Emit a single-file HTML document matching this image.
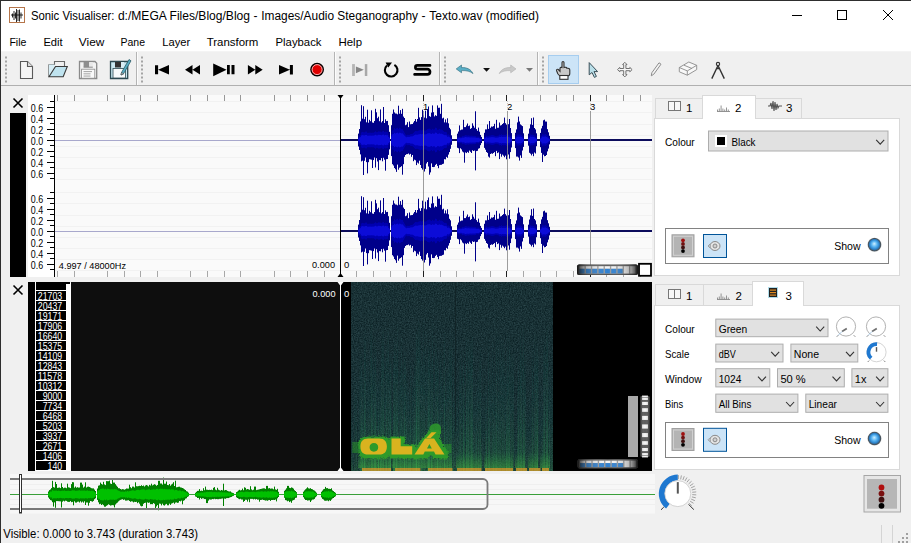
<!DOCTYPE html><html><head><meta charset="utf-8"><style>
html,body{margin:0;padding:0;background:#f0f0f0;}
body{width:911px;height:543px;overflow:hidden;position:relative;}
svg{position:absolute;left:0;top:0;font-family:"Liberation Sans",sans-serif;}
</style></head><body>
<svg width="911" height="543" viewBox="0 0 911 543">

<rect x="0" y="0" width="911" height="543" fill="#f0f0f0" />
<rect x="0" y="0" width="911" height="51" fill="#ffffff" />
<rect x="0" y="51" width="911" height="1" fill="#f4f4f4" />
<rect x="0" y="85" width="911" height="1" fill="#b0b0b0" />
<rect x="0" y="0" width="911" height="1" fill="#2e2e2e" />
<rect x="0" y="0" width="1" height="543" fill="#2e2e2e" />
<rect x="9.5" y="7.5" width="15" height="15" fill="#fff" stroke="#b5754a" stroke-width="1"/>
<path d="M11 15H23M12.5 13.5V17.5M14 11V20M15.5 12.5V18.5M16.5 9V22M18 10V21M19.5 9.5V21.5M21 12.5V18.5" fill="none" stroke="#111" stroke-width="0.9" />
<text x="30.9" y="20" font-size="12" fill="#000" textLength="83.6" lengthAdjust="spacingAndGlyphs" >Sonic Visualiser:</text>
<text x="117.9" y="20" font-size="12" fill="#000" textLength="132.1" lengthAdjust="spacingAndGlyphs" >d:/MEGA Files/Blog/Blog</text>
<text x="253.4" y="20" font-size="12" fill="#000" textLength="4" lengthAdjust="spacingAndGlyphs" >-</text>
<text x="261.3" y="20" font-size="12" fill="#000" textLength="156.7" lengthAdjust="spacingAndGlyphs" >Images/Audio Steganography</text>
<text x="421.4" y="20" font-size="12" fill="#000" textLength="4" lengthAdjust="spacingAndGlyphs" >-</text>
<text x="429.3" y="20" font-size="12" fill="#000" textLength="109.7" lengthAdjust="spacingAndGlyphs" >Texto.wav (modified)</text>
<path d="M792 15.5H802" fill="none" stroke="#000" stroke-width="1" />
<rect x="837.5" y="10.5" width="9" height="9" fill="none" stroke="#000" stroke-width="1"/>
<path d="M883 10L893 20M893 10L883 20" fill="none" stroke="#000" stroke-width="1" />
<text x="9.4" y="45.5" font-size="11.5" fill="#000" textLength="17" lengthAdjust="spacingAndGlyphs" >File</text>
<text x="43.4" y="45.5" font-size="11.5" fill="#000" textLength="19.2" lengthAdjust="spacingAndGlyphs" >Edit</text>
<text x="78.8" y="45.5" font-size="11.5" fill="#000" textLength="25.5" lengthAdjust="spacingAndGlyphs" >View</text>
<text x="120.5" y="45.5" font-size="11.5" fill="#000" textLength="24.5" lengthAdjust="spacingAndGlyphs" >Pane</text>
<text x="162.3" y="45.5" font-size="11.5" fill="#000" textLength="28" lengthAdjust="spacingAndGlyphs" >Layer</text>
<text x="206.7" y="45.5" font-size="11.5" fill="#000" textLength="51.7" lengthAdjust="spacingAndGlyphs" >Transform</text>
<text x="275.5" y="45.5" font-size="11.5" fill="#000" textLength="46" lengthAdjust="spacingAndGlyphs" >Playback</text>
<text x="338.5" y="45.5" font-size="11.5" fill="#000" textLength="23.5" lengthAdjust="spacingAndGlyphs" >Help</text>
<rect x="136" y="52" width="1" height="33" fill="#b4b4b4" />
<rect x="137" y="52" width="1" height="33" fill="#fcfcfc" />
<rect x="334" y="52" width="1" height="33" fill="#b4b4b4" />
<rect x="335" y="52" width="1" height="33" fill="#fcfcfc" />
<rect x="439" y="52" width="1" height="33" fill="#b4b4b4" />
<rect x="440" y="52" width="1" height="33" fill="#fcfcfc" />
<rect x="537" y="52" width="1" height="33" fill="#b4b4b4" />
<rect x="538" y="52" width="1" height="33" fill="#fcfcfc" />
<rect x="5" y="56.5" width="2" height="2" fill="#a4a4a4" />
<rect x="5" y="60.5" width="2" height="2" fill="#a4a4a4" />
<rect x="5" y="64.5" width="2" height="2" fill="#a4a4a4" />
<rect x="5" y="68.5" width="2" height="2" fill="#a4a4a4" />
<rect x="5" y="72.5" width="2" height="2" fill="#a4a4a4" />
<rect x="5" y="76.5" width="2" height="2" fill="#a4a4a4" />
<rect x="5" y="80.5" width="2" height="2" fill="#a4a4a4" />
<rect x="141" y="56.5" width="2" height="2" fill="#a4a4a4" />
<rect x="141" y="60.5" width="2" height="2" fill="#a4a4a4" />
<rect x="141" y="64.5" width="2" height="2" fill="#a4a4a4" />
<rect x="141" y="68.5" width="2" height="2" fill="#a4a4a4" />
<rect x="141" y="72.5" width="2" height="2" fill="#a4a4a4" />
<rect x="141" y="76.5" width="2" height="2" fill="#a4a4a4" />
<rect x="141" y="80.5" width="2" height="2" fill="#a4a4a4" />
<rect x="339" y="56.5" width="2" height="2" fill="#a4a4a4" />
<rect x="339" y="60.5" width="2" height="2" fill="#a4a4a4" />
<rect x="339" y="64.5" width="2" height="2" fill="#a4a4a4" />
<rect x="339" y="68.5" width="2" height="2" fill="#a4a4a4" />
<rect x="339" y="72.5" width="2" height="2" fill="#a4a4a4" />
<rect x="339" y="76.5" width="2" height="2" fill="#a4a4a4" />
<rect x="339" y="80.5" width="2" height="2" fill="#a4a4a4" />
<rect x="444" y="56.5" width="2" height="2" fill="#a4a4a4" />
<rect x="444" y="60.5" width="2" height="2" fill="#a4a4a4" />
<rect x="444" y="64.5" width="2" height="2" fill="#a4a4a4" />
<rect x="444" y="68.5" width="2" height="2" fill="#a4a4a4" />
<rect x="444" y="72.5" width="2" height="2" fill="#a4a4a4" />
<rect x="444" y="76.5" width="2" height="2" fill="#a4a4a4" />
<rect x="444" y="80.5" width="2" height="2" fill="#a4a4a4" />
<rect x="542" y="56.5" width="2" height="2" fill="#a4a4a4" />
<rect x="542" y="60.5" width="2" height="2" fill="#a4a4a4" />
<rect x="542" y="64.5" width="2" height="2" fill="#a4a4a4" />
<rect x="542" y="68.5" width="2" height="2" fill="#a4a4a4" />
<rect x="542" y="72.5" width="2" height="2" fill="#a4a4a4" />
<rect x="542" y="76.5" width="2" height="2" fill="#a4a4a4" />
<rect x="542" y="80.5" width="2" height="2" fill="#a4a4a4" />
<path d="M20.5 61.5H27.5L32.5 66.5V78.5H20.5Z" fill="#f6f6f6" stroke="#5a5a5a" stroke-width="1.1" />
<path d="M27.5 61.5V66.5H32.5" fill="#e0e0e0" stroke="#5a5a5a" stroke-width="1.1" />
<path d="M48.8 64.5H54.5V61.5H64.5V66.5" fill="#f0f0f0" stroke="#6a6a6a" stroke-width="1.1" />
<path d="M48.8 64.5V76.8" fill="none" stroke="#777" stroke-width="1.4" />
<path d="M48.8 64.5H54.5V76.5H48.8Z" fill="#d8eef6" stroke="none" stroke-width="1" />
<path d="M55.5 66.5H67.3L63.2 76.8H49Z" fill="#bfe3ef" stroke="#3a3a3a" stroke-width="1.1" />
<path d="M79.5 61.5H95L96.7 63.2V78.5H79.5Z" fill="#f2f2f2" stroke="#8a8a8a" stroke-width="1.3" />
<rect x="83.6" y="62" width="5.6" height="5.2" fill="#8e8e8e" />
<rect x="89.2" y="62" width="3.6" height="5.2" fill="#e8e8e8" />
<path d="M83.6 67.2H92.8" fill="none" stroke="#8a8a8a" stroke-width="1" />
<rect x="81.6" y="69.2" width="13.2" height="9" fill="#fafafa" stroke="#8a8a8a" stroke-width="0.8"/>
<rect x="83.5" y="71.2" width="8.5" height="0.9" fill="#9a9a9a" />
<rect x="83.5" y="73.4" width="7" height="0.9" fill="#9a9a9a" />
<rect x="83.5" y="75.6" width="7" height="0.9" fill="#9a9a9a" />
<path d="M110.5 61.5H127.7V78.5H110.5Z" fill="#c9e8f1" stroke="#2d4a52" stroke-width="1.3" />
<rect x="115" y="62" width="6" height="5.5" fill="#333" />
<rect x="121" y="62" width="3" height="5.5" fill="#d9eef5" />
<rect x="113" y="68.5" width="12.5" height="9.5" fill="#f8fbfc" stroke="#2d4a52" stroke-width="0.8"/>
<path d="M121.5 72.5L129 59.5L131 60.8L123.5 73.8L121 75Z" fill="#58aec4" stroke="#2d5a66" stroke-width="0.8" />
<path d="M121.5 72.5L123.5 73.8L121 75Z" fill="#fff" stroke="#333" stroke-width="0.6" />
<path d="M155 65.2H158.1V74.3H155Z M158.1 69.7L169 65V74.5Z" fill="#000" stroke="none" stroke-width="1" />
<path d="M185 69.7L192.5 65V74.5Z M192.5 69.7L200 65V74.5Z" fill="#000" stroke="none" stroke-width="1" />
<path d="M213.2 63.4L226.6 69.8L213.2 76.3Z M227 65.1H229.8V74.3H227Z M231.5 65.1H234.5V74.3H231.5Z" fill="#000" stroke="none" stroke-width="1" />
<path d="M247.9 65V74.5L255.3 69.7Z M255.3 65V74.5L262.7 69.7Z" fill="#000" stroke="none" stroke-width="1" />
<path d="M279 65V74.5L289.9 69.7Z M289.9 65H292.9V74.5H289.9Z" fill="#000" stroke="none" stroke-width="1" />
<circle cx="317.1" cy="69.6" r="6.2" fill="#e00000" stroke="#000" stroke-width="1.4"/>
<circle cx="317.1" cy="69.6" r="5" fill="none" stroke="#fff" stroke-width="0.7"/>
<rect x="352.1" y="64.1" width="2.8" height="11.9" fill="#b4b4b4" />
<path d="M355.9 66.4L363.8 69.8L355.9 73.3Z" fill="#858585" stroke="none" stroke-width="1" />
<rect x="364.8" y="64.1" width="2.5" height="11.9" fill="#a8a8a8" />
<path d="M387 65.5A6.3 6.3 0 1 0 394.4 64.8" fill="none" stroke="#000" stroke-width="2.1" />
<path d="M385.6 62.6H392L388.3 67.6Z" fill="#000" stroke="none" stroke-width="1" />
<path d="M430 65.4H417.3A1.8 1.8 0 0 0 417.3 69.2H427.4A2 2 0 0 1 427.4 74.4H414.6" fill="none" stroke="#000" stroke-width="2.7" stroke-linecap="round" stroke-linejoin="round"/>
<path d="M456.2 68.9L461.5 65V67.6C466.5 67.2 471 69.2 473 73.6C470.3 71.3 466.5 70.4 461.5 70.6V72.8Z" fill="#5aaec6" stroke="#2f6a7a" stroke-width="0.6" />
<path d="M483.1 67.9H490L486.55 71.8Z" fill="#111" stroke="none" stroke-width="1" />
<path d="M516 68.9L510.7 65V67.6C505.7 67.2 501.2 69.2 499.2 73.6C501.9 71.3 505.7 70.4 510.7 70.6V72.8Z" fill="#c8c8c8" stroke="#b0b0b0" stroke-width="0.6" />
<path d="M526 67.9H533L529.5 71.8Z" fill="#777" stroke="none" stroke-width="1" />
<rect x="548.5" y="55.5" width="30" height="28" fill="#cce4f7" stroke="#a6cdef" stroke-width="1"/>
<path d="M562 62.5C562 61.2 564 61.2 564 62.5V67.5C565.5 67 566.8 67.4 567 68.3C568.5 68 569.8 68.8 569.8 70V73.5C569.8 75 568.5 76 567.5 76H560.5C559.5 76 558.6 75 557.8 73.8L556.5 70.5C556.2 69.5 557.5 68.8 558.3 69.5L560 71.3V68C560.5 67.2 561.5 67.3 562 67.5Z" fill="#c9c9c9" stroke="#303030" stroke-width="1.1" />
<rect x="559.8" y="75.5" width="8.2" height="3.8" fill="#fff" stroke="#303030" stroke-width="1.1"/>
<path d="M589.2 62.6V74.8L592 72.5L594.4 77.4L596.4 76.4L594 71.6H597.6Z" fill="#b9dfe9" stroke="#3b4f58" stroke-width="1" />
<path d="M624.8 62.3L627 64.6H625.9V68.5H629.8V67.4L632.1 69.6L629.8 71.8V70.7H625.9V74.6H627L624.8 76.9L622.6 74.6H623.7V70.7H619.8V71.8L617.5 69.6L619.8 67.4V68.5H623.7V64.6H622.6Z" fill="#f6f6f6" stroke="#707070" stroke-width="1" />
<path d="M651.3 75.8L651.8 72.8L659 62.8L661 64.2L653.8 74.2Z" fill="#f4f4f4" stroke="#8c8c8c" stroke-width="1" />
<path d="M679.3 67.5L688.8 62L696.7 65.3V69.6L687.3 75.2L679.3 71.8Z" fill="#f8f8f8" stroke="#8a8a8a" stroke-width="0.9" />
<path d="M679.3 67.5L687.3 70.9L696.7 65.3M687.3 70.9V75.2M684 65.2L692 68.5" fill="none" stroke="#8a8a8a" stroke-width="0.9" />
<circle cx="718" cy="63.9" r="1.6" fill="#fff" stroke="#333" stroke-width="1.2"/>
<path d="M718 65.5L711.8 78.6M718 65.5L724.3 78.6M716.3 68.5H719.7" fill="none" stroke="#333" stroke-width="1.4" />
<rect x="10" y="113" width="16" height="164" fill="#000" />
<path d="M13.5 98.5L22.5 107.5M22.5 98.5L13.5 107.5" fill="none" stroke="#000" stroke-width="1.6" />
<rect x="28" y="95" width="27" height="182" fill="#ffffff" />
<rect x="55" y="95" width="597" height="182" fill="#fafafa" />
<rect x="55" y="135" width="597" height="1" fill="#f2f2f2" />
<rect x="55" y="146" width="597" height="1" fill="#f2f2f2" />
<rect x="55" y="124" width="597" height="1" fill="#f2f2f2" />
<rect x="55" y="157" width="597" height="1" fill="#f2f2f2" />
<rect x="55" y="112" width="597" height="1" fill="#f2f2f2" />
<rect x="55" y="168" width="597" height="1" fill="#f2f2f2" />
<rect x="55" y="101" width="597" height="1" fill="#f2f2f2" />
<rect x="55" y="179" width="597" height="1" fill="#f2f2f2" />
<rect x="55" y="226" width="597" height="1" fill="#f2f2f2" />
<rect x="55" y="237" width="597" height="1" fill="#f2f2f2" />
<rect x="55" y="215" width="597" height="1" fill="#f2f2f2" />
<rect x="55" y="248" width="597" height="1" fill="#f2f2f2" />
<rect x="55" y="203" width="597" height="1" fill="#f2f2f2" />
<rect x="55" y="259" width="597" height="1" fill="#f2f2f2" />
<rect x="55" y="192" width="597" height="1" fill="#f2f2f2" />
<rect x="55" y="270" width="597" height="1" fill="#f2f2f2" />
<rect x="54" y="95" width="1" height="182" fill="#000" />
<rect x="47" y="107" width="7" height="1" fill="#000" />
<rect x="47" y="118" width="7" height="1" fill="#000" />
<rect x="47" y="129" width="7" height="1" fill="#000" />
<rect x="47" y="140" width="7" height="1" fill="#000" />
<rect x="47" y="151" width="7" height="1" fill="#000" />
<rect x="47" y="162" width="7" height="1" fill="#000" />
<rect x="47" y="173" width="7" height="1" fill="#000" />
<rect x="50" y="101" width="4" height="1" fill="#000" />
<rect x="50" y="112" width="4" height="1" fill="#000" />
<rect x="50" y="123" width="4" height="1" fill="#000" />
<rect x="50" y="134" width="4" height="1" fill="#000" />
<rect x="50" y="145" width="4" height="1" fill="#000" />
<rect x="50" y="156" width="4" height="1" fill="#000" />
<rect x="50" y="167" width="4" height="1" fill="#000" />
<rect x="50" y="178" width="4" height="1" fill="#000" />
<text x="30.8" y="111.6" font-size="10.5" fill="#000" textLength="12.4" lengthAdjust="spacingAndGlyphs" >0.6</text>
<text x="30.8" y="122.6" font-size="10.5" fill="#000" textLength="12.4" lengthAdjust="spacingAndGlyphs" >0.4</text>
<text x="30.8" y="133.6" font-size="10.5" fill="#000" textLength="12.4" lengthAdjust="spacingAndGlyphs" >0.2</text>
<text x="30.8" y="144.6" font-size="10.5" fill="#000" textLength="12.4" lengthAdjust="spacingAndGlyphs" >0.0</text>
<text x="30.8" y="155.6" font-size="10.5" fill="#000" textLength="12.4" lengthAdjust="spacingAndGlyphs" >0.2</text>
<text x="30.8" y="166.6" font-size="10.5" fill="#000" textLength="12.4" lengthAdjust="spacingAndGlyphs" >0.4</text>
<text x="30.8" y="177.6" font-size="10.5" fill="#000" textLength="12.4" lengthAdjust="spacingAndGlyphs" >0.6</text>
<rect x="47" y="198" width="7" height="1" fill="#000" />
<rect x="47" y="209" width="7" height="1" fill="#000" />
<rect x="47" y="220" width="7" height="1" fill="#000" />
<rect x="47" y="231" width="7" height="1" fill="#000" />
<rect x="47" y="242" width="7" height="1" fill="#000" />
<rect x="47" y="253" width="7" height="1" fill="#000" />
<rect x="47" y="264" width="7" height="1" fill="#000" />
<rect x="50" y="192" width="4" height="1" fill="#000" />
<rect x="50" y="203" width="4" height="1" fill="#000" />
<rect x="50" y="214" width="4" height="1" fill="#000" />
<rect x="50" y="225" width="4" height="1" fill="#000" />
<rect x="50" y="236" width="4" height="1" fill="#000" />
<rect x="50" y="247" width="4" height="1" fill="#000" />
<rect x="50" y="258" width="4" height="1" fill="#000" />
<rect x="50" y="269" width="4" height="1" fill="#000" />
<text x="30.8" y="202.6" font-size="10.5" fill="#000" textLength="12.4" lengthAdjust="spacingAndGlyphs" >0.6</text>
<text x="30.8" y="213.6" font-size="10.5" fill="#000" textLength="12.4" lengthAdjust="spacingAndGlyphs" >0.4</text>
<text x="30.8" y="224.6" font-size="10.5" fill="#000" textLength="12.4" lengthAdjust="spacingAndGlyphs" >0.2</text>
<text x="30.8" y="235.6" font-size="10.5" fill="#000" textLength="12.4" lengthAdjust="spacingAndGlyphs" >0.0</text>
<text x="30.8" y="246.6" font-size="10.5" fill="#000" textLength="12.4" lengthAdjust="spacingAndGlyphs" >0.2</text>
<text x="30.8" y="257.6" font-size="10.5" fill="#000" textLength="12.4" lengthAdjust="spacingAndGlyphs" >0.4</text>
<text x="30.8" y="268.6" font-size="10.5" fill="#000" textLength="12.4" lengthAdjust="spacingAndGlyphs" >0.6</text>
<rect x="57" y="95" width="1" height="6" fill="#989898" />
<rect x="57" y="271" width="1" height="6" fill="#a8a8a8" />
<rect x="74" y="95" width="1" height="6" fill="#989898" />
<rect x="74" y="271" width="1" height="6" fill="#a8a8a8" />
<rect x="107" y="95" width="1" height="6" fill="#989898" />
<rect x="107" y="271" width="1" height="6" fill="#a8a8a8" />
<rect x="124" y="95" width="1" height="6" fill="#989898" />
<rect x="124" y="271" width="1" height="6" fill="#a8a8a8" />
<rect x="140" y="95" width="1" height="6" fill="#989898" />
<rect x="140" y="271" width="1" height="6" fill="#a8a8a8" />
<rect x="157" y="95" width="1" height="6" fill="#989898" />
<rect x="157" y="271" width="1" height="6" fill="#a8a8a8" />
<rect x="190" y="95" width="1" height="6" fill="#989898" />
<rect x="190" y="271" width="1" height="6" fill="#a8a8a8" />
<rect x="207" y="95" width="1" height="6" fill="#989898" />
<rect x="207" y="271" width="1" height="6" fill="#a8a8a8" />
<rect x="224" y="95" width="1" height="6" fill="#989898" />
<rect x="224" y="271" width="1" height="6" fill="#a8a8a8" />
<rect x="240" y="95" width="1" height="6" fill="#989898" />
<rect x="240" y="271" width="1" height="6" fill="#a8a8a8" />
<rect x="274" y="95" width="1" height="6" fill="#989898" />
<rect x="274" y="271" width="1" height="6" fill="#a8a8a8" />
<rect x="290" y="95" width="1" height="6" fill="#989898" />
<rect x="290" y="271" width="1" height="6" fill="#a8a8a8" />
<rect x="307" y="95" width="1" height="6" fill="#989898" />
<rect x="307" y="271" width="1" height="6" fill="#a8a8a8" />
<rect x="324" y="95" width="1" height="6" fill="#989898" />
<rect x="324" y="271" width="1" height="6" fill="#a8a8a8" />
<rect x="356" y="95" width="1" height="6" fill="#989898" />
<rect x="356" y="271" width="1" height="6" fill="#a8a8a8" />
<rect x="373" y="95" width="1" height="6" fill="#989898" />
<rect x="373" y="271" width="1" height="6" fill="#a8a8a8" />
<rect x="390" y="95" width="1" height="6" fill="#989898" />
<rect x="390" y="271" width="1" height="6" fill="#a8a8a8" />
<rect x="406" y="95" width="1" height="6" fill="#989898" />
<rect x="406" y="271" width="1" height="6" fill="#a8a8a8" />
<rect x="423" y="95" width="1" height="6" fill="#202020" />
<rect x="423" y="271" width="1" height="6" fill="#202020" />
<rect x="440" y="95" width="1" height="6" fill="#989898" />
<rect x="440" y="271" width="1" height="6" fill="#a8a8a8" />
<rect x="456" y="95" width="1" height="6" fill="#989898" />
<rect x="456" y="271" width="1" height="6" fill="#a8a8a8" />
<rect x="473" y="95" width="1" height="6" fill="#989898" />
<rect x="473" y="271" width="1" height="6" fill="#a8a8a8" />
<rect x="490" y="95" width="1" height="6" fill="#989898" />
<rect x="490" y="271" width="1" height="6" fill="#a8a8a8" />
<rect x="506" y="95" width="1" height="6" fill="#202020" />
<rect x="506" y="271" width="1" height="6" fill="#202020" />
<rect x="523" y="95" width="1" height="6" fill="#989898" />
<rect x="523" y="271" width="1" height="6" fill="#a8a8a8" />
<rect x="540" y="95" width="1" height="6" fill="#989898" />
<rect x="540" y="271" width="1" height="6" fill="#a8a8a8" />
<rect x="556" y="95" width="1" height="6" fill="#989898" />
<rect x="556" y="271" width="1" height="6" fill="#a8a8a8" />
<rect x="573" y="95" width="1" height="6" fill="#989898" />
<rect x="573" y="271" width="1" height="6" fill="#a8a8a8" />
<rect x="590" y="95" width="1" height="6" fill="#202020" />
<rect x="590" y="271" width="1" height="6" fill="#202020" />
<rect x="606" y="95" width="1" height="6" fill="#989898" />
<rect x="606" y="271" width="1" height="6" fill="#a8a8a8" />
<rect x="623" y="95" width="1" height="6" fill="#989898" />
<rect x="623" y="271" width="1" height="6" fill="#a8a8a8" />
<rect x="640" y="95" width="1" height="6" fill="#989898" />
<rect x="640" y="271" width="1" height="6" fill="#a8a8a8" />
<text x="423" y="110" font-size="9.5" fill="#000" >1</text>
<text x="507" y="110" font-size="9.5" fill="#000" >2</text>
<text x="590" y="110" font-size="9.5" fill="#000" >3</text>
<rect x="55" y="140" width="285" height="1" fill="#a8a8cc" />
<rect x="340" y="139" width="312" height="2" fill="#0c0c5c" />
<rect x="55" y="231" width="285" height="1" fill="#a8a8cc" />
<rect x="340" y="230" width="312" height="2" fill="#0c0c5c" />
<text x="58.8" y="269" font-size="9.5" fill="#000" textLength="67.2" lengthAdjust="spacingAndGlyphs" >4.997 / 48000Hz</text>
<text x="312" y="268" font-size="9.5" fill="#000" textLength="23" lengthAdjust="spacingAndGlyphs" >0.000</text>
<text x="344" y="268" font-size="9.5" fill="#000" >0</text>
<path d="M358.50 133.6V146.5M359.50 129.0V150.0M360.50 121.4V154.4M361.50 105.2V161.4M362.50 118.7V160.7M363.50 106.2V175.0M364.50 119.2V160.8M365.50 116.8V157.5M366.50 122.3V162.1M367.50 109.7V173.4M368.50 122.7V162.2M369.50 119.8V159.2M370.50 121.2V159.4M371.50 110.3V159.7M372.50 122.5V168.0M373.50 122.8V160.1M374.50 121.0V157.5M375.50 108.8V167.5M376.50 112.3V158.2M377.50 118.2V161.5M378.50 116.7V170.1M379.50 121.2V160.1M380.50 109.4V160.3M381.50 122.4V158.1M382.50 121.1V161.3M383.50 107.0V157.8M384.50 123.0V159.7M385.50 119.3V170.7M386.50 121.1V159.2M387.50 120.9V159.0M388.50 125.2V154.9M389.50 131.8V149.4M391.50 125.2V156.1M392.50 113.8V164.2M393.50 109.5V165.5M394.50 112.4V168.0M395.50 113.5V169.3M396.50 113.6V171.9M397.50 114.3V164.6M398.50 105.7V169.7M399.50 113.7V167.7M400.50 110.1V167.1M401.50 113.8V166.2M402.50 108.8V174.7M403.50 116.6V164.2M404.50 118.0V156.9M405.50 125.2V155.0M406.50 124.6V154.2M407.50 122.2V154.1M408.50 127.1V153.5M409.50 121.5V154.6M410.50 124.3V153.9M411.50 124.1V156.8M412.50 124.0V155.0M413.50 122.5V161.2M414.50 121.0V159.7M415.50 119.0V160.3M416.50 121.7V165.1M417.50 119.0V162.6M418.50 107.8V163.6M419.50 117.4V160.7M420.50 119.9V165.0M421.50 117.1V168.0M422.50 109.7V169.6M423.50 115.3V168.7M424.50 117.6V171.5M425.50 110.7V168.9M426.50 118.3V163.5M427.50 109.1V162.0M428.50 106.5V166.5M429.50 116.1V174.7M430.50 116.8V172.4M431.50 112.6V163.4M432.50 105.4V167.0M433.50 112.2V167.1M434.50 116.4V166.8M435.50 115.2V164.9M436.50 115.9V163.9M437.50 105.4V165.9M438.50 107.8V168.2M439.50 107.7V165.1M440.50 113.8V164.9M441.50 103.8V164.8M442.50 118.4V164.1M443.50 117.7V163.7M444.50 122.4V159.2M445.50 119.4V159.4M446.50 122.5V156.9M447.50 118.3V157.8M448.50 123.3V154.6M449.50 127.8V152.1M450.50 129.3V148.8M451.50 135.3V144.8M457.50 133.7V147.8M458.50 131.5V148.3M459.50 125.4V153.1M460.50 130.2V148.3M461.50 129.6V149.4M462.50 129.5V151.5M463.50 119.8V152.4M464.50 127.1V162.7M465.50 127.1V152.4M466.50 125.5V153.1M467.50 123.5V151.9M468.50 126.1V152.8M469.50 125.5V150.6M470.50 128.9V151.8M471.50 128.1V153.0M472.50 123.3V150.3M473.50 125.7V151.0M474.50 127.7V150.6M475.50 111.3V170.4M476.50 129.1V151.1M477.50 130.8V150.8M478.50 127.6V148.7M479.50 131.7V148.2M480.50 134.9V145.2M481.50 136.9V143.1M484.50 132.8V147.9M485.50 129.4V149.7M486.50 129.4V152.0M487.50 124.4V152.9M488.50 128.9V156.6M489.50 121.0V157.6M490.50 127.8V154.0M491.50 126.5V153.4M492.50 126.7V153.8M493.50 126.1V153.0M494.50 123.8V152.1M495.50 128.8V156.2M496.50 119.8V150.9M497.50 127.8V153.1M498.50 127.7V152.4M499.50 122.5V159.1M500.50 125.5V153.8M501.50 125.1V156.7M502.50 124.0V154.6M503.50 123.1V155.7M504.50 117.6V157.2M505.50 123.2V155.6M506.50 124.6V159.3M507.50 119.0V156.2M508.50 124.2V154.5M509.50 119.0V158.7M510.50 128.0V152.1M511.50 133.1V147.5M515.50 132.8V148.1M516.50 129.4V156.6M517.50 122.4V156.6M518.50 116.6V157.5M519.50 121.5V160.6M520.50 124.4V155.4M521.50 125.3V157.9M522.50 126.1V150.5M523.50 133.3V146.9M528.50 133.7V145.7M529.50 128.5V152.8M530.50 124.4V153.7M531.50 118.2V155.4M532.50 124.9V153.8M533.50 117.5V156.2M534.50 128.0V152.5M535.50 129.4V153.5M536.50 133.3V146.2M540.50 132.9V147.2M541.50 128.4V152.9M542.50 125.8V162.0M543.50 120.3V154.7M544.50 119.7V156.3M545.50 121.5V156.0M546.50 121.6V155.0M547.50 129.2V151.4M548.50 132.3V148.6M549.50 135.8V144.4" stroke="#00008a" stroke-width="1" fill="none"/>
<path d="M358.50 137.7V142.3M359.50 136.0V144.0M360.50 135.2V144.8M361.50 132.4V147.6M362.50 131.9V148.1M363.50 132.2V147.8M364.50 132.3V147.7M365.50 131.7V148.3M366.50 131.6V148.4M367.50 132.8V147.2M368.50 132.8V147.2M369.50 132.7V147.3M370.50 132.7V147.3M371.50 132.8V147.2M372.50 132.7V147.3M373.50 132.7V147.3M374.50 132.1V147.9M375.50 131.3V148.7M376.50 132.2V147.8M377.50 132.1V147.9M378.50 131.4V148.6M379.50 131.5V148.5M380.50 131.7V148.3M381.50 132.2V147.8M382.50 131.4V148.6M383.50 131.0V149.0M384.50 132.1V147.9M385.50 131.7V148.3M386.50 132.0V148.0M387.50 132.1V147.9M388.50 134.8V145.2M389.50 136.6V143.4M391.50 134.2V145.8M392.50 130.7V149.3M393.50 130.0V150.0M394.50 128.2V151.8M395.50 129.1V150.9M396.50 128.3V151.7M397.50 127.8V152.2M398.50 129.1V150.9M399.50 127.8V152.2M400.50 128.2V151.8M401.50 129.0V151.0M402.50 129.0V151.0M403.50 130.8V149.2M404.50 132.6V147.4M405.50 134.4V145.6M406.50 135.3V144.7M407.50 134.8V145.2M408.50 134.9V145.1M409.50 134.9V145.1M410.50 134.2V145.8M411.50 134.0V146.0M412.50 133.8V146.2M413.50 132.9V147.1M414.50 131.8V148.2M415.50 131.0V149.0M416.50 131.1V148.9M417.50 131.2V148.8M418.50 130.7V149.3M419.50 130.3V149.7M420.50 129.8V150.2M421.50 130.5V149.5M422.50 129.8V150.2M423.50 129.6V150.4M424.50 130.6V149.4M425.50 130.6V149.4M426.50 130.1V149.9M427.50 129.1V150.9M428.50 128.8V151.2M429.50 128.6V151.4M430.50 129.3V150.7M431.50 129.9V150.1M432.50 128.9V151.1M433.50 129.6V150.4M434.50 129.4V150.6M435.50 127.7V152.3M436.50 128.1V151.9M437.50 129.8V150.2M438.50 129.7V150.3M439.50 128.9V151.1M440.50 129.6V150.4M441.50 129.6V150.4M442.50 130.1V149.9M443.50 131.1V148.9M444.50 131.9V148.1M445.50 131.9V148.1M446.50 132.3V147.7M447.50 134.6V145.4M448.50 134.4V145.6M449.50 135.3V144.7M450.50 137.4V142.6M451.50 138.4V141.6M457.50 137.5V142.5M458.50 137.1V142.9M459.50 136.6V143.4M460.50 137.0V143.0M461.50 136.8V143.2M462.50 135.9V144.1M463.50 136.1V143.9M464.50 135.7V144.3M465.50 135.1V144.9M466.50 135.3V144.7M467.50 135.6V144.4M468.50 135.4V144.6M469.50 135.7V144.3M470.50 135.8V144.2M471.50 135.7V144.3M472.50 135.8V144.2M473.50 135.9V144.1M474.50 135.8V144.2M475.50 136.0V144.0M476.50 136.7V143.3M477.50 136.7V143.3M478.50 136.6V143.4M479.50 137.4V142.6M480.50 138.2V141.8M481.50 138.9V141.1M484.50 137.0V143.0M485.50 136.5V143.5M486.50 135.4V144.6M487.50 136.1V143.9M488.50 136.0V144.0M489.50 135.7V144.3M490.50 135.5V144.5M491.50 135.2V144.8M492.50 135.1V144.9M493.50 135.3V144.7M494.50 135.7V144.3M495.50 136.1V143.9M496.50 136.2V143.8M497.50 135.9V144.1M498.50 135.6V144.4M499.50 134.7V145.3M500.50 135.0V145.0M501.50 134.3V145.7M502.50 135.0V145.0M503.50 134.8V145.2M504.50 134.9V145.1M505.50 134.8V145.2M506.50 134.2V145.8M507.50 134.8V145.2M508.50 134.7V145.3M509.50 135.5V144.5M510.50 136.1V143.9M511.50 137.7V142.3M515.50 137.6V142.4M516.50 135.8V144.2M517.50 134.5V145.5M518.50 134.4V145.6M519.50 134.6V145.4M520.50 134.4V145.6M521.50 135.1V144.9M522.50 136.2V143.8M523.50 137.8V142.2M528.50 137.5V142.5M529.50 136.3V143.7M530.50 134.4V145.6M531.50 134.8V145.2M532.50 134.7V145.3M533.50 135.0V145.0M534.50 135.5V144.5M535.50 136.8V143.2M536.50 138.0V142.0M540.50 137.9V142.1M541.50 135.9V144.1M542.50 134.2V145.8M543.50 134.5V145.5M544.50 134.4V145.6M545.50 134.2V145.8M546.50 134.9V145.1M547.50 135.9V144.1M548.50 137.3V142.7M549.50 138.5V141.5" stroke="#0000b0" stroke-width="1" fill="none"/>
<path d="M358.50 138.6V141.4M359.50 137.6V142.4M360.50 137.1V142.9M361.50 135.5V144.5M362.50 135.1V144.9M363.50 135.3V144.7M364.50 135.4V144.6M365.50 135.0V145.0M366.50 135.0V145.0M367.50 135.7V144.3M368.50 135.7V144.3M369.50 135.6V144.4M370.50 135.6V144.4M371.50 135.7V144.3M372.50 135.6V144.4M373.50 135.6V144.4M374.50 135.3V144.7M375.50 134.8V145.2M376.50 135.3V144.7M377.50 135.3V144.7M378.50 134.8V145.2M379.50 134.9V145.1M380.50 135.0V145.0M381.50 135.3V144.7M382.50 134.8V145.2M383.50 134.6V145.4M384.50 135.3V144.7M385.50 135.0V145.0M386.50 135.2V144.8M387.50 135.2V144.8M388.50 136.9V143.1M389.50 138.0V142.0M391.50 136.5V143.5M392.50 134.4V145.6M393.50 134.0V146.0M394.50 132.9V147.1M395.50 133.5V146.5M396.50 133.0V147.0M397.50 132.7V147.3M398.50 133.4V146.6M399.50 132.7V147.3M400.50 132.9V147.1M401.50 133.4V146.6M402.50 133.4V146.6M403.50 134.5V145.5M404.50 135.6V144.4M405.50 136.6V143.4M406.50 137.2V142.8M407.50 136.9V143.1M408.50 136.9V143.1M409.50 136.9V143.1M410.50 136.5V143.5M411.50 136.4V143.6M412.50 136.3V143.7M413.50 135.8V144.2M414.50 135.1V144.9M415.50 134.6V145.4M416.50 134.7V145.3M417.50 134.7V145.3M418.50 134.4V145.6M419.50 134.2V145.8M420.50 133.9V146.1M421.50 134.3V145.7M422.50 133.9V146.1M423.50 133.8V146.2M424.50 134.4V145.6M425.50 134.4V145.6M426.50 134.1V145.9M427.50 133.5V146.5M428.50 133.3V146.7M429.50 133.2V146.8M430.50 133.6V146.4M431.50 134.0V146.0M432.50 133.3V146.7M433.50 133.7V146.3M434.50 133.6V146.4M435.50 132.6V147.4M436.50 132.9V147.1M437.50 133.9V146.1M438.50 133.8V146.2M439.50 133.4V146.6M440.50 133.8V146.2M441.50 133.7V146.3M442.50 134.1V145.9M443.50 134.6V145.4M444.50 135.1V144.9M445.50 135.1V144.9M446.50 135.4V144.6M447.50 136.8V143.2M448.50 136.6V143.4M449.50 137.2V142.8M450.50 138.4V141.6M451.50 139.1V140.9M457.50 138.5V141.5M458.50 138.2V141.8M459.50 137.9V142.1M460.50 138.2V141.8M461.50 138.1V141.9M462.50 137.6V142.4M463.50 137.7V142.3M464.50 137.4V142.6M465.50 137.0V143.0M466.50 137.2V142.8M467.50 137.3V142.7M468.50 137.2V142.8M469.50 137.4V142.6M470.50 137.5V142.5M471.50 137.4V142.6M472.50 137.5V142.5M473.50 137.5V142.5M474.50 137.5V142.5M475.50 137.6V142.4M476.50 138.0V142.0M477.50 138.0V142.0M478.50 137.9V142.1M479.50 138.5V141.5M480.50 138.9V141.1M481.50 139.3V140.7M484.50 138.2V141.8M485.50 137.9V142.1M486.50 137.2V142.8M487.50 137.7V142.3M488.50 137.6V142.4M489.50 137.4V142.6M490.50 137.3V142.7M491.50 137.1V142.9M492.50 137.1V142.9M493.50 137.2V142.8M494.50 137.4V142.6M495.50 137.7V142.3M496.50 137.7V142.3M497.50 137.6V142.4M498.50 137.4V142.6M499.50 136.8V143.2M500.50 137.0V143.0M501.50 136.6V143.4M502.50 137.0V143.0M503.50 136.9V143.1M504.50 136.9V143.1M505.50 136.9V143.1M506.50 136.5V143.5M507.50 136.9V143.1M508.50 136.8V143.2M509.50 137.3V142.7M510.50 137.7V142.3M511.50 138.6V141.4M515.50 138.6V141.4M516.50 137.5V142.5M517.50 136.7V143.3M518.50 136.6V143.4M519.50 136.8V143.2M520.50 136.6V143.4M521.50 137.0V143.0M522.50 137.7V142.3M523.50 138.7V141.3M528.50 138.5V141.5M529.50 137.8V142.2M530.50 136.6V143.4M531.50 136.9V143.1M532.50 136.8V143.2M533.50 137.0V143.0M534.50 137.3V142.7M535.50 138.1V141.9M536.50 138.8V141.2M540.50 138.7V141.3M541.50 137.6V142.4M542.50 136.5V143.5M543.50 136.7V143.3M544.50 136.6V143.4M545.50 136.5V143.5M546.50 137.0V143.0M547.50 137.5V142.5M548.50 138.4V141.6M549.50 139.1V140.9" stroke="#0c0cd8" stroke-width="1" fill="none"/>
<path d="M358.50 224.6V237.5M359.50 220.0V241.0M360.50 212.4V245.4M361.50 196.2V252.4M362.50 209.7V251.7M363.50 197.2V266.0M364.50 210.2V251.8M365.50 207.8V248.5M366.50 213.3V253.1M367.50 200.7V264.4M368.50 213.7V253.2M369.50 210.8V250.2M370.50 212.2V250.4M371.50 201.3V250.7M372.50 213.5V259.0M373.50 213.8V251.1M374.50 212.0V248.5M375.50 199.8V258.5M376.50 203.3V249.2M377.50 209.2V252.5M378.50 207.7V261.1M379.50 212.2V251.1M380.50 200.4V251.3M381.50 213.4V249.1M382.50 212.1V252.3M383.50 198.0V248.8M384.50 214.0V250.7M385.50 210.3V261.7M386.50 212.1V250.2M387.50 211.9V250.0M388.50 216.2V245.9M389.50 222.8V240.4M391.50 216.2V247.1M392.50 204.8V255.2M393.50 200.5V256.5M394.50 203.4V259.0M395.50 204.5V260.3M396.50 204.6V262.9M397.50 205.3V255.6M398.50 196.7V260.7M399.50 204.7V258.7M400.50 201.1V258.1M401.50 204.8V257.2M402.50 199.8V265.7M403.50 207.6V255.2M404.50 209.0V247.9M405.50 216.2V246.0M406.50 215.6V245.2M407.50 213.2V245.1M408.50 218.1V244.5M409.50 212.5V245.6M410.50 215.3V244.9M411.50 215.1V247.8M412.50 215.0V246.0M413.50 213.5V252.2M414.50 212.0V250.7M415.50 210.0V251.3M416.50 212.7V256.1M417.50 210.0V253.6M418.50 198.8V254.6M419.50 208.4V251.7M420.50 210.9V256.0M421.50 208.1V259.0M422.50 200.7V260.6M423.50 206.3V259.7M424.50 208.6V262.5M425.50 201.7V259.9M426.50 209.3V254.5M427.50 200.1V253.0M428.50 197.5V257.5M429.50 207.1V265.7M430.50 207.8V263.4M431.50 203.6V254.4M432.50 196.4V258.0M433.50 203.2V258.1M434.50 207.4V257.8M435.50 206.2V255.9M436.50 206.9V254.9M437.50 196.4V256.9M438.50 198.8V259.2M439.50 198.7V256.1M440.50 204.8V255.9M441.50 194.8V255.8M442.50 209.4V255.1M443.50 208.7V254.7M444.50 213.4V250.2M445.50 210.4V250.4M446.50 213.5V247.9M447.50 209.3V248.8M448.50 214.3V245.6M449.50 218.8V243.1M450.50 220.3V239.8M451.50 226.3V235.8M457.50 224.7V238.8M458.50 222.5V239.3M459.50 216.4V244.1M460.50 221.2V239.3M461.50 220.6V240.4M462.50 220.5V242.5M463.50 210.8V243.4M464.50 218.1V253.7M465.50 218.1V243.4M466.50 216.5V244.1M467.50 214.5V242.9M468.50 217.1V243.8M469.50 216.5V241.6M470.50 219.9V242.8M471.50 219.1V244.0M472.50 214.3V241.3M473.50 216.7V242.0M474.50 218.7V241.6M475.50 202.3V261.4M476.50 220.1V242.1M477.50 221.8V241.8M478.50 218.6V239.7M479.50 222.7V239.2M480.50 225.9V236.2M481.50 227.9V234.1M484.50 223.8V238.9M485.50 220.4V240.7M486.50 220.4V243.0M487.50 215.4V243.9M488.50 219.9V247.6M489.50 212.0V248.6M490.50 218.8V245.0M491.50 217.5V244.4M492.50 217.7V244.8M493.50 217.1V244.0M494.50 214.8V243.1M495.50 219.8V247.2M496.50 210.8V241.9M497.50 218.8V244.1M498.50 218.7V243.4M499.50 213.5V250.1M500.50 216.5V244.8M501.50 216.1V247.7M502.50 215.0V245.6M503.50 214.1V246.7M504.50 208.6V248.2M505.50 214.2V246.6M506.50 215.6V250.3M507.50 210.0V247.2M508.50 215.2V245.5M509.50 210.0V249.7M510.50 219.0V243.1M511.50 224.1V238.5M515.50 223.8V239.1M516.50 220.4V247.6M517.50 213.4V247.6M518.50 207.6V248.5M519.50 212.5V251.6M520.50 215.4V246.4M521.50 216.3V248.9M522.50 217.1V241.5M523.50 224.3V237.9M528.50 224.7V236.7M529.50 219.5V243.8M530.50 215.4V244.7M531.50 209.2V246.4M532.50 215.9V244.8M533.50 208.5V247.2M534.50 219.0V243.5M535.50 220.4V244.5M536.50 224.3V237.2M540.50 223.9V238.2M541.50 219.4V243.9M542.50 216.8V253.0M543.50 211.3V245.7M544.50 210.7V247.3M545.50 212.5V247.0M546.50 212.6V246.0M547.50 220.2V242.4M548.50 223.3V239.6M549.50 226.8V235.4" stroke="#00008a" stroke-width="1" fill="none"/>
<path d="M358.50 228.7V233.3M359.50 227.0V235.0M360.50 226.2V235.8M361.50 223.4V238.6M362.50 222.9V239.1M363.50 223.2V238.8M364.50 223.3V238.7M365.50 222.7V239.3M366.50 222.6V239.4M367.50 223.8V238.2M368.50 223.8V238.2M369.50 223.7V238.3M370.50 223.7V238.3M371.50 223.8V238.2M372.50 223.7V238.3M373.50 223.7V238.3M374.50 223.1V238.9M375.50 222.3V239.7M376.50 223.2V238.8M377.50 223.1V238.9M378.50 222.4V239.6M379.50 222.5V239.5M380.50 222.7V239.3M381.50 223.2V238.8M382.50 222.4V239.6M383.50 222.0V240.0M384.50 223.1V238.9M385.50 222.7V239.3M386.50 223.0V239.0M387.50 223.1V238.9M388.50 225.8V236.2M389.50 227.6V234.4M391.50 225.2V236.8M392.50 221.7V240.3M393.50 221.0V241.0M394.50 219.2V242.8M395.50 220.1V241.9M396.50 219.3V242.7M397.50 218.8V243.2M398.50 220.1V241.9M399.50 218.8V243.2M400.50 219.2V242.8M401.50 220.0V242.0M402.50 220.0V242.0M403.50 221.8V240.2M404.50 223.6V238.4M405.50 225.4V236.6M406.50 226.3V235.7M407.50 225.8V236.2M408.50 225.9V236.1M409.50 225.9V236.1M410.50 225.2V236.8M411.50 225.0V237.0M412.50 224.8V237.2M413.50 223.9V238.1M414.50 222.8V239.2M415.50 222.0V240.0M416.50 222.1V239.9M417.50 222.2V239.8M418.50 221.7V240.3M419.50 221.3V240.7M420.50 220.8V241.2M421.50 221.5V240.5M422.50 220.8V241.2M423.50 220.6V241.4M424.50 221.6V240.4M425.50 221.6V240.4M426.50 221.1V240.9M427.50 220.1V241.9M428.50 219.8V242.2M429.50 219.6V242.4M430.50 220.3V241.7M431.50 220.9V241.1M432.50 219.9V242.1M433.50 220.6V241.4M434.50 220.4V241.6M435.50 218.7V243.3M436.50 219.1V242.9M437.50 220.8V241.2M438.50 220.7V241.3M439.50 219.9V242.1M440.50 220.6V241.4M441.50 220.6V241.4M442.50 221.1V240.9M443.50 222.1V239.9M444.50 222.9V239.1M445.50 222.9V239.1M446.50 223.3V238.7M447.50 225.6V236.4M448.50 225.4V236.6M449.50 226.3V235.7M450.50 228.4V233.6M451.50 229.4V232.6M457.50 228.5V233.5M458.50 228.1V233.9M459.50 227.6V234.4M460.50 228.0V234.0M461.50 227.8V234.2M462.50 226.9V235.1M463.50 227.1V234.9M464.50 226.7V235.3M465.50 226.1V235.9M466.50 226.3V235.7M467.50 226.6V235.4M468.50 226.4V235.6M469.50 226.7V235.3M470.50 226.8V235.2M471.50 226.7V235.3M472.50 226.8V235.2M473.50 226.9V235.1M474.50 226.8V235.2M475.50 227.0V235.0M476.50 227.7V234.3M477.50 227.7V234.3M478.50 227.6V234.4M479.50 228.4V233.6M480.50 229.2V232.8M481.50 229.9V232.1M484.50 228.0V234.0M485.50 227.5V234.5M486.50 226.4V235.6M487.50 227.1V234.9M488.50 227.0V235.0M489.50 226.7V235.3M490.50 226.5V235.5M491.50 226.2V235.8M492.50 226.1V235.9M493.50 226.3V235.7M494.50 226.7V235.3M495.50 227.1V234.9M496.50 227.2V234.8M497.50 226.9V235.1M498.50 226.6V235.4M499.50 225.7V236.3M500.50 226.0V236.0M501.50 225.3V236.7M502.50 226.0V236.0M503.50 225.8V236.2M504.50 225.9V236.1M505.50 225.8V236.2M506.50 225.2V236.8M507.50 225.8V236.2M508.50 225.7V236.3M509.50 226.5V235.5M510.50 227.1V234.9M511.50 228.7V233.3M515.50 228.6V233.4M516.50 226.8V235.2M517.50 225.5V236.5M518.50 225.4V236.6M519.50 225.6V236.4M520.50 225.4V236.6M521.50 226.1V235.9M522.50 227.2V234.8M523.50 228.8V233.2M528.50 228.5V233.5M529.50 227.3V234.7M530.50 225.4V236.6M531.50 225.8V236.2M532.50 225.7V236.3M533.50 226.0V236.0M534.50 226.5V235.5M535.50 227.8V234.2M536.50 229.0V233.0M540.50 228.9V233.1M541.50 226.9V235.1M542.50 225.2V236.8M543.50 225.5V236.5M544.50 225.4V236.6M545.50 225.2V236.8M546.50 225.9V236.1M547.50 226.9V235.1M548.50 228.3V233.7M549.50 229.5V232.5" stroke="#0000b0" stroke-width="1" fill="none"/>
<path d="M358.50 229.6V232.4M359.50 228.6V233.4M360.50 228.1V233.9M361.50 226.5V235.5M362.50 226.1V235.9M363.50 226.3V235.7M364.50 226.4V235.6M365.50 226.0V236.0M366.50 226.0V236.0M367.50 226.7V235.3M368.50 226.7V235.3M369.50 226.6V235.4M370.50 226.6V235.4M371.50 226.7V235.3M372.50 226.6V235.4M373.50 226.6V235.4M374.50 226.3V235.7M375.50 225.8V236.2M376.50 226.3V235.7M377.50 226.3V235.7M378.50 225.8V236.2M379.50 225.9V236.1M380.50 226.0V236.0M381.50 226.3V235.7M382.50 225.8V236.2M383.50 225.6V236.4M384.50 226.3V235.7M385.50 226.0V236.0M386.50 226.2V235.8M387.50 226.2V235.8M388.50 227.9V234.1M389.50 229.0V233.0M391.50 227.5V234.5M392.50 225.4V236.6M393.50 225.0V237.0M394.50 223.9V238.1M395.50 224.5V237.5M396.50 224.0V238.0M397.50 223.7V238.3M398.50 224.4V237.6M399.50 223.7V238.3M400.50 223.9V238.1M401.50 224.4V237.6M402.50 224.4V237.6M403.50 225.5V236.5M404.50 226.6V235.4M405.50 227.6V234.4M406.50 228.2V233.8M407.50 227.9V234.1M408.50 227.9V234.1M409.50 227.9V234.1M410.50 227.5V234.5M411.50 227.4V234.6M412.50 227.3V234.7M413.50 226.8V235.2M414.50 226.1V235.9M415.50 225.6V236.4M416.50 225.7V236.3M417.50 225.7V236.3M418.50 225.4V236.6M419.50 225.2V236.8M420.50 224.9V237.1M421.50 225.3V236.7M422.50 224.9V237.1M423.50 224.8V237.2M424.50 225.4V236.6M425.50 225.4V236.6M426.50 225.1V236.9M427.50 224.5V237.5M428.50 224.3V237.7M429.50 224.2V237.8M430.50 224.6V237.4M431.50 225.0V237.0M432.50 224.3V237.7M433.50 224.7V237.3M434.50 224.6V237.4M435.50 223.6V238.4M436.50 223.9V238.1M437.50 224.9V237.1M438.50 224.8V237.2M439.50 224.4V237.6M440.50 224.8V237.2M441.50 224.7V237.3M442.50 225.1V236.9M443.50 225.6V236.4M444.50 226.1V235.9M445.50 226.1V235.9M446.50 226.4V235.6M447.50 227.8V234.2M448.50 227.6V234.4M449.50 228.2V233.8M450.50 229.4V232.6M451.50 230.1V231.9M457.50 229.5V232.5M458.50 229.2V232.8M459.50 228.9V233.1M460.50 229.2V232.8M461.50 229.1V232.9M462.50 228.6V233.4M463.50 228.7V233.3M464.50 228.4V233.6M465.50 228.0V234.0M466.50 228.2V233.8M467.50 228.3V233.7M468.50 228.2V233.8M469.50 228.4V233.6M470.50 228.5V233.5M471.50 228.4V233.6M472.50 228.5V233.5M473.50 228.5V233.5M474.50 228.5V233.5M475.50 228.6V233.4M476.50 229.0V233.0M477.50 229.0V233.0M478.50 228.9V233.1M479.50 229.5V232.5M480.50 229.9V232.1M481.50 230.3V231.7M484.50 229.2V232.8M485.50 228.9V233.1M486.50 228.2V233.8M487.50 228.7V233.3M488.50 228.6V233.4M489.50 228.4V233.6M490.50 228.3V233.7M491.50 228.1V233.9M492.50 228.1V233.9M493.50 228.2V233.8M494.50 228.4V233.6M495.50 228.7V233.3M496.50 228.7V233.3M497.50 228.6V233.4M498.50 228.4V233.6M499.50 227.8V234.2M500.50 228.0V234.0M501.50 227.6V234.4M502.50 228.0V234.0M503.50 227.9V234.1M504.50 227.9V234.1M505.50 227.9V234.1M506.50 227.5V234.5M507.50 227.9V234.1M508.50 227.8V234.2M509.50 228.3V233.7M510.50 228.7V233.3M511.50 229.6V232.4M515.50 229.6V232.4M516.50 228.5V233.5M517.50 227.7V234.3M518.50 227.6V234.4M519.50 227.8V234.2M520.50 227.6V234.4M521.50 228.0V234.0M522.50 228.7V233.3M523.50 229.7V232.3M528.50 229.5V232.5M529.50 228.8V233.2M530.50 227.6V234.4M531.50 227.9V234.1M532.50 227.8V234.2M533.50 228.0V234.0M534.50 228.3V233.7M535.50 229.1V232.9M536.50 229.8V232.2M540.50 229.7V232.3M541.50 228.6V233.4M542.50 227.5V234.5M543.50 227.7V234.3M544.50 227.6V234.4M545.50 227.5V234.5M546.50 228.0V234.0M547.50 228.5V233.5M548.50 229.4V232.6M549.50 230.1V231.9" stroke="#0c0cd8" stroke-width="1" fill="none"/>
<rect x="423" y="111" width="1" height="160" fill="#8c8c8c" opacity="0.85"/>
<rect x="423" y="101" width="1" height="1" fill="#c8c8c8" />
<rect x="423" y="103" width="1" height="1" fill="#c8c8c8" />
<rect x="423" y="105" width="1" height="1" fill="#c8c8c8" />
<rect x="423" y="107" width="1" height="1" fill="#c8c8c8" />
<rect x="423" y="109" width="1" height="1" fill="#c8c8c8" />
<rect x="507" y="111" width="1" height="160" fill="#8c8c8c" opacity="0.85"/>
<rect x="507" y="101" width="1" height="1" fill="#c8c8c8" />
<rect x="507" y="103" width="1" height="1" fill="#c8c8c8" />
<rect x="507" y="105" width="1" height="1" fill="#c8c8c8" />
<rect x="507" y="107" width="1" height="1" fill="#c8c8c8" />
<rect x="507" y="109" width="1" height="1" fill="#c8c8c8" />
<rect x="590" y="111" width="1" height="160" fill="#8c8c8c" opacity="0.85"/>
<rect x="590" y="101" width="1" height="1" fill="#c8c8c8" />
<rect x="590" y="103" width="1" height="1" fill="#c8c8c8" />
<rect x="590" y="105" width="1" height="1" fill="#c8c8c8" />
<rect x="590" y="107" width="1" height="1" fill="#c8c8c8" />
<rect x="590" y="109" width="1" height="1" fill="#c8c8c8" />
<rect x="340" y="96" width="1" height="181" fill="#000" />
<path d="M337.5 95H343.5L340.5 99Z" fill="#000" stroke="none" stroke-width="1" />
<path d="M337.5 277H343.5L340.5 273Z" fill="#000" stroke="none" stroke-width="1" />
<rect x="577" y="264.5" width="61" height="10.5" rx="2" fill="url(#twh)"/>
<rect x="577" y="264.5" width="61" height="10.5" rx="2.5" fill="#505050"/>
<rect x="578.5" y="265.8" width="58" height="8" fill="#9a9a9a" />
<rect x="579.5" y="266.3" width="5" height="2.5" fill="#f4f4f4" />
<rect x="579.5" y="268.8" width="5" height="4.6" fill="#2f80d0" />
<rect x="585.85" y="266.3" width="5" height="2.5" fill="#f4f4f4" />
<rect x="585.85" y="268.8" width="5" height="4.6" fill="#2f80d0" />
<rect x="592.2" y="266.3" width="5" height="2.5" fill="#f4f4f4" />
<rect x="592.2" y="268.8" width="5" height="4.6" fill="#2f80d0" />
<rect x="598.55" y="266.3" width="5" height="2.5" fill="#f4f4f4" />
<rect x="598.55" y="268.8" width="5" height="4.6" fill="#2f80d0" />
<rect x="604.9" y="266.3" width="5" height="2.5" fill="#f4f4f4" />
<rect x="604.9" y="268.8" width="5" height="4.6" fill="#2f80d0" />
<rect x="611.25" y="266.3" width="5" height="2.5" fill="#f4f4f4" />
<rect x="611.25" y="268.8" width="5" height="4.6" fill="#2f80d0" />
<rect x="617.6" y="266.3" width="5" height="2.5" fill="#f4f4f4" />
<rect x="617.6" y="268.8" width="5" height="4.6" fill="#2f80d0" />
<rect x="623.95" y="266.3" width="5" height="7.1" fill="#f4f4f4" />
<rect x="630.3" y="266.3" width="5" height="7.1" fill="#f4f4f4" />
<rect x="577" y="264.5" width="61" height="10.5" rx="2.5" fill="url(#twh)"/>
<rect x="639" y="263.8" width="12" height="12" fill="#fff" stroke="#000" stroke-width="1.8"/>
<path d="M13.5 285.5L22.5 294.5M22.5 285.5L13.5 294.5" fill="none" stroke="#000" stroke-width="1.6" />
<rect x="28" y="282" width="7" height="189" fill="#000" />
<rect x="35" y="282" width="1" height="189" fill="#ffffff" />
<rect x="36" y="282" width="30" height="189" fill="#000" />
<rect x="66" y="283" width="5" height="188" fill="#ffffff" />
<rect x="36" y="282" width="34" height="2" fill="#000" />
<rect x="71" y="282" width="270" height="189" fill="#0e0e0e" />
<rect x="341" y="282" width="311" height="189" fill="#000" />
<rect x="36" y="290" width="30" height="1" fill="#ffffff" />
<rect x="36" y="300" width="30" height="1" fill="#ffffff" />
<rect x="36" y="310" width="30" height="1" fill="#ffffff" />
<rect x="36" y="320" width="30" height="1" fill="#ffffff" />
<rect x="36" y="330" width="30" height="1" fill="#ffffff" />
<rect x="36" y="340" width="30" height="1" fill="#ffffff" />
<rect x="36" y="350" width="30" height="1" fill="#ffffff" />
<rect x="36" y="360" width="30" height="1" fill="#ffffff" />
<rect x="36" y="370" width="30" height="1" fill="#ffffff" />
<rect x="36" y="380" width="30" height="1" fill="#ffffff" />
<rect x="36" y="390" width="30" height="1" fill="#ffffff" />
<rect x="36" y="400" width="30" height="1" fill="#ffffff" />
<rect x="36" y="410" width="30" height="1" fill="#ffffff" />
<rect x="36" y="420" width="30" height="1" fill="#ffffff" />
<rect x="36" y="430" width="30" height="1" fill="#ffffff" />
<rect x="36" y="440" width="30" height="1" fill="#ffffff" />
<rect x="36" y="450" width="30" height="1" fill="#ffffff" />
<rect x="36" y="460" width="30" height="1" fill="#ffffff" />
<rect x="36" y="470" width="30" height="1" fill="#ffffff" />
<text x="62.2" y="300.3" font-size="10.3" fill="#ffffff" textLength="24.4" lengthAdjust="spacingAndGlyphs" text-anchor="end" >21703</text>
<text x="62.2" y="310.3" font-size="10.3" fill="#ffffff" textLength="24.4" lengthAdjust="spacingAndGlyphs" text-anchor="end" >20437</text>
<text x="62.2" y="320.3" font-size="10.3" fill="#ffffff" textLength="24.4" lengthAdjust="spacingAndGlyphs" text-anchor="end" >19171</text>
<text x="62.2" y="330.3" font-size="10.3" fill="#ffffff" textLength="24.4" lengthAdjust="spacingAndGlyphs" text-anchor="end" >17906</text>
<text x="62.2" y="340.3" font-size="10.3" fill="#ffffff" textLength="24.4" lengthAdjust="spacingAndGlyphs" text-anchor="end" >16640</text>
<text x="62.2" y="350.3" font-size="10.3" fill="#ffffff" textLength="24.4" lengthAdjust="spacingAndGlyphs" text-anchor="end" >15375</text>
<text x="62.2" y="360.3" font-size="10.3" fill="#ffffff" textLength="24.4" lengthAdjust="spacingAndGlyphs" text-anchor="end" >14109</text>
<text x="62.2" y="370.3" font-size="10.3" fill="#ffffff" textLength="24.4" lengthAdjust="spacingAndGlyphs" text-anchor="end" >12843</text>
<text x="62.2" y="380.3" font-size="10.3" fill="#ffffff" textLength="24.4" lengthAdjust="spacingAndGlyphs" text-anchor="end" >11578</text>
<text x="62.2" y="390.3" font-size="10.3" fill="#ffffff" textLength="24.4" lengthAdjust="spacingAndGlyphs" text-anchor="end" >10312</text>
<text x="62.2" y="400.3" font-size="10.3" fill="#ffffff" textLength="19.52" lengthAdjust="spacingAndGlyphs" text-anchor="end" >9000</text>
<text x="62.2" y="410.3" font-size="10.3" fill="#ffffff" textLength="19.52" lengthAdjust="spacingAndGlyphs" text-anchor="end" >7734</text>
<text x="62.2" y="420.3" font-size="10.3" fill="#ffffff" textLength="19.52" lengthAdjust="spacingAndGlyphs" text-anchor="end" >6468</text>
<text x="62.2" y="430.3" font-size="10.3" fill="#ffffff" textLength="19.52" lengthAdjust="spacingAndGlyphs" text-anchor="end" >5203</text>
<text x="62.2" y="440.3" font-size="10.3" fill="#ffffff" textLength="19.52" lengthAdjust="spacingAndGlyphs" text-anchor="end" >3937</text>
<text x="62.2" y="450.3" font-size="10.3" fill="#ffffff" textLength="19.52" lengthAdjust="spacingAndGlyphs" text-anchor="end" >2671</text>
<text x="62.2" y="460.3" font-size="10.3" fill="#ffffff" textLength="19.52" lengthAdjust="spacingAndGlyphs" text-anchor="end" >1406</text>
<text x="62.2" y="470.3" font-size="10.3" fill="#ffffff" textLength="14.64" lengthAdjust="spacingAndGlyphs" text-anchor="end" >140</text>
<text x="335.5" y="297" font-size="9.5" fill="#ffffff" textLength="23" lengthAdjust="spacingAndGlyphs" text-anchor="end" >0.000</text>
<text x="344" y="297" font-size="9.5" fill="#ffffff" >0</text>
<defs>
<filter id="nz" x="0" y="0" width="1" height="1" filterUnits="objectBoundingBox">
<feTurbulence type="fractalNoise" baseFrequency="0.75" numOctaves="2" seed="4" result="t"/>
<feColorMatrix in="t" type="matrix" values="0 0 0 0 0.12  0 0 0 0 0.25  0 0 0 0 0.27  0.6 0 0 0 -0.15" result="c"/>
<feComposite in="c" in2="SourceGraphic" operator="in"/>
</filter>
<linearGradient id="sg" x1="0" y1="0" x2="0" y2="1">
<stop offset="0" stop-color="#1f6a58" stop-opacity="0"/>
<stop offset="0.5" stop-color="#22785a" stop-opacity="0.3"/>
<stop offset="0.85" stop-color="#2a8c50" stop-opacity="0.65"/>
<stop offset="1" stop-color="#3aa048" stop-opacity="0.9"/>
</linearGradient>
</defs>
<rect x="351" y="282" width="202" height="189" fill="#0c2125" />
<rect x="351" y="282" width="202" height="189" fill="#fff" filter="url(#nz)"/>
<filter id="sb" x="-0.01" y="0" width="1.02" height="1"><feGaussianBlur stdDeviation="0.7 0"/></filter><g filter="url(#sb)">
<rect x="351" y="400.7" width="1" height="70.3" fill="url(#sg)" opacity="0.22"/>
<rect x="352" y="409.6" width="1" height="61.4" fill="url(#sg)" opacity="0.29"/>
<rect x="353" y="411.0" width="1" height="60.0" fill="url(#sg)" opacity="0.09"/>
<rect x="354" y="352.9" width="1" height="118.1" fill="url(#sg)" opacity="0.22"/>
<rect x="355" y="383.1" width="1" height="87.9" fill="url(#sg)" opacity="0.19"/>
<rect x="356" y="360.2" width="1" height="110.8" fill="url(#sg)" opacity="0.31"/>
<rect x="357" y="398.6" width="1" height="72.4" fill="url(#sg)" opacity="0.15"/>
<rect x="358" y="354.7" width="1" height="116.3" fill="url(#sg)" opacity="0.12"/>
<rect x="359" y="345.1" width="1" height="125.9" fill="url(#sg)" opacity="0.22"/>
<rect x="360" y="348.4" width="1" height="122.6" fill="url(#sg)" opacity="0.44"/>
<rect x="361" y="345.8" width="1" height="125.2" fill="url(#sg)" opacity="0.60"/>
<rect x="362" y="365.2" width="1" height="105.8" fill="url(#sg)" opacity="0.71"/>
<rect x="363" y="358.3" width="1" height="112.7" fill="url(#sg)" opacity="0.37"/>
<rect x="364" y="331.3" width="1" height="139.7" fill="url(#sg)" opacity="0.82"/>
<rect x="365" y="321.1" width="1" height="149.9" fill="url(#sg)" opacity="0.46"/>
<rect x="366" y="353.5" width="1" height="117.5" fill="url(#sg)" opacity="0.28"/>
<rect x="367" y="335.4" width="1" height="135.6" fill="url(#sg)" opacity="0.24"/>
<rect x="368" y="345.7" width="1" height="125.3" fill="url(#sg)" opacity="0.42"/>
<rect x="369" y="361.5" width="1" height="109.5" fill="url(#sg)" opacity="0.42"/>
<rect x="370" y="314.0" width="1" height="157.0" fill="url(#sg)" opacity="0.27"/>
<rect x="371" y="313.8" width="1" height="157.2" fill="url(#sg)" opacity="0.67"/>
<rect x="372" y="353.2" width="1" height="117.8" fill="url(#sg)" opacity="0.69"/>
<rect x="373" y="325.5" width="1" height="145.5" fill="url(#sg)" opacity="0.36"/>
<rect x="374" y="365.5" width="1" height="105.5" fill="url(#sg)" opacity="0.78"/>
<rect x="375" y="336.1" width="1" height="134.9" fill="url(#sg)" opacity="0.78"/>
<rect x="376" y="365.6" width="1" height="105.4" fill="url(#sg)" opacity="0.45"/>
<rect x="377" y="366.5" width="1" height="104.5" fill="url(#sg)" opacity="0.31"/>
<rect x="378" y="376.2" width="1" height="94.8" fill="url(#sg)" opacity="1.00"/>
<rect x="379" y="352.8" width="1" height="118.2" fill="url(#sg)" opacity="0.30"/>
<rect x="380" y="374.7" width="1" height="96.3" fill="url(#sg)" opacity="0.80"/>
<rect x="381" y="332.2" width="1" height="138.8" fill="url(#sg)" opacity="0.58"/>
<rect x="382" y="320.4" width="1" height="150.6" fill="url(#sg)" opacity="0.53"/>
<rect x="383" y="321.3" width="1" height="149.7" fill="url(#sg)" opacity="0.66"/>
<rect x="384" y="347.3" width="1" height="123.7" fill="url(#sg)" opacity="0.28"/>
<rect x="385" y="351.6" width="1" height="119.4" fill="url(#sg)" opacity="0.49"/>
<rect x="386" y="340.0" width="1" height="131.0" fill="url(#sg)" opacity="0.74"/>
<rect x="387" y="313.7" width="1" height="157.3" fill="url(#sg)" opacity="0.28"/>
<rect x="388" y="321.6" width="1" height="149.4" fill="url(#sg)" opacity="0.52"/>
<rect x="389" y="357.5" width="1" height="113.5" fill="url(#sg)" opacity="0.65"/>
<rect x="390" y="349.2" width="1" height="121.8" fill="url(#sg)" opacity="0.91"/>
<rect x="391" y="349.1" width="1" height="121.9" fill="url(#sg)" opacity="0.22"/>
<rect x="392" y="404.7" width="1" height="66.3" fill="url(#sg)" opacity="0.18"/>
<rect x="393" y="351.6" width="1" height="119.4" fill="url(#sg)" opacity="0.72"/>
<rect x="394" y="330.4" width="1" height="140.6" fill="url(#sg)" opacity="0.69"/>
<rect x="395" y="336.4" width="1" height="134.6" fill="url(#sg)" opacity="0.49"/>
<rect x="396" y="353.9" width="1" height="117.1" fill="url(#sg)" opacity="0.84"/>
<rect x="397" y="316.2" width="1" height="154.8" fill="url(#sg)" opacity="0.55"/>
<rect x="398" y="370.7" width="1" height="100.3" fill="url(#sg)" opacity="0.41"/>
<rect x="399" y="364.2" width="1" height="106.8" fill="url(#sg)" opacity="0.47"/>
<rect x="400" y="363.2" width="1" height="107.8" fill="url(#sg)" opacity="0.67"/>
<rect x="401" y="329.7" width="1" height="141.3" fill="url(#sg)" opacity="0.47"/>
<rect x="402" y="358.4" width="1" height="112.6" fill="url(#sg)" opacity="0.54"/>
<rect x="403" y="355.5" width="1" height="115.5" fill="url(#sg)" opacity="0.43"/>
<rect x="404" y="348.3" width="1" height="122.7" fill="url(#sg)" opacity="0.90"/>
<rect x="405" y="342.4" width="1" height="128.6" fill="url(#sg)" opacity="0.40"/>
<rect x="406" y="367.8" width="1" height="103.2" fill="url(#sg)" opacity="0.71"/>
<rect x="407" y="368.5" width="1" height="102.5" fill="url(#sg)" opacity="0.40"/>
<rect x="408" y="377.8" width="1" height="93.2" fill="url(#sg)" opacity="0.63"/>
<rect x="409" y="389.0" width="1" height="82.0" fill="url(#sg)" opacity="0.62"/>
<rect x="410" y="358.0" width="1" height="113.0" fill="url(#sg)" opacity="0.66"/>
<rect x="411" y="385.1" width="1" height="85.9" fill="url(#sg)" opacity="0.29"/>
<rect x="412" y="368.4" width="1" height="102.6" fill="url(#sg)" opacity="0.46"/>
<rect x="413" y="371.2" width="1" height="99.8" fill="url(#sg)" opacity="0.60"/>
<rect x="414" y="344.4" width="1" height="126.6" fill="url(#sg)" opacity="0.54"/>
<rect x="415" y="357.9" width="1" height="113.1" fill="url(#sg)" opacity="0.59"/>
<rect x="416" y="322.8" width="1" height="148.2" fill="url(#sg)" opacity="0.99"/>
<rect x="417" y="325.3" width="1" height="145.7" fill="url(#sg)" opacity="0.51"/>
<rect x="418" y="312.9" width="1" height="158.1" fill="url(#sg)" opacity="0.66"/>
<rect x="419" y="313.8" width="1" height="157.2" fill="url(#sg)" opacity="0.53"/>
<rect x="420" y="322.7" width="1" height="148.3" fill="url(#sg)" opacity="0.33"/>
<rect x="421" y="342.6" width="1" height="128.4" fill="url(#sg)" opacity="0.55"/>
<rect x="422" y="351.3" width="1" height="119.7" fill="url(#sg)" opacity="0.48"/>
<rect x="423" y="310.0" width="1" height="161.0" fill="url(#sg)" opacity="0.39"/>
<rect x="424" y="338.7" width="1" height="132.3" fill="url(#sg)" opacity="0.49"/>
<rect x="425" y="336.2" width="1" height="134.8" fill="url(#sg)" opacity="0.32"/>
<rect x="426" y="316.6" width="1" height="154.4" fill="url(#sg)" opacity="0.27"/>
<rect x="427" y="350.7" width="1" height="120.3" fill="url(#sg)" opacity="0.58"/>
<rect x="428" y="339.3" width="1" height="131.7" fill="url(#sg)" opacity="0.82"/>
<rect x="429" y="335.9" width="1" height="135.1" fill="url(#sg)" opacity="0.74"/>
<rect x="430" y="349.5" width="1" height="121.5" fill="url(#sg)" opacity="0.34"/>
<rect x="431" y="352.6" width="1" height="118.4" fill="url(#sg)" opacity="0.82"/>
<rect x="432" y="310.1" width="1" height="160.9" fill="url(#sg)" opacity="0.46"/>
<rect x="433" y="353.1" width="1" height="117.9" fill="url(#sg)" opacity="0.31"/>
<rect x="434" y="372.4" width="1" height="98.6" fill="url(#sg)" opacity="0.33"/>
<rect x="435" y="325.8" width="1" height="145.2" fill="url(#sg)" opacity="0.48"/>
<rect x="436" y="336.6" width="1" height="134.4" fill="url(#sg)" opacity="0.42"/>
<rect x="437" y="351.7" width="1" height="119.3" fill="url(#sg)" opacity="0.83"/>
<rect x="438" y="344.7" width="1" height="126.3" fill="url(#sg)" opacity="0.41"/>
<rect x="439" y="378.9" width="1" height="92.1" fill="url(#sg)" opacity="0.50"/>
<rect x="440" y="343.4" width="1" height="127.6" fill="url(#sg)" opacity="0.55"/>
<rect x="441" y="341.0" width="1" height="130.0" fill="url(#sg)" opacity="0.32"/>
<rect x="442" y="367.9" width="1" height="103.1" fill="url(#sg)" opacity="0.43"/>
<rect x="443" y="329.2" width="1" height="141.8" fill="url(#sg)" opacity="0.26"/>
<rect x="444" y="327.2" width="1" height="143.8" fill="url(#sg)" opacity="0.81"/>
<rect x="445" y="379.2" width="1" height="91.8" fill="url(#sg)" opacity="0.41"/>
<rect x="446" y="343.2" width="1" height="127.8" fill="url(#sg)" opacity="0.43"/>
<rect x="447" y="363.3" width="1" height="107.7" fill="url(#sg)" opacity="0.62"/>
<rect x="448" y="334.7" width="1" height="136.3" fill="url(#sg)" opacity="0.30"/>
<rect x="449" y="336.9" width="1" height="134.1" fill="url(#sg)" opacity="0.51"/>
<rect x="450" y="343.8" width="1" height="127.2" fill="url(#sg)" opacity="0.48"/>
<rect x="451" y="325.8" width="1" height="145.2" fill="url(#sg)" opacity="0.53"/>
<rect x="452" y="394.4" width="1" height="76.6" fill="url(#sg)" opacity="0.25"/>
<rect x="453" y="338.2" width="1" height="132.8" fill="url(#sg)" opacity="0.39"/>
<rect x="454" y="385.3" width="1" height="85.7" fill="url(#sg)" opacity="0.25"/>
<rect x="455" y="378.7" width="1" height="92.3" fill="url(#sg)" opacity="0.24"/>
<rect x="456" y="372.4" width="1" height="98.6" fill="url(#sg)" opacity="0.28"/>
<rect x="457" y="365.8" width="1" height="105.2" fill="url(#sg)" opacity="0.27"/>
<rect x="458" y="403.5" width="1" height="67.5" fill="url(#sg)" opacity="0.39"/>
<rect x="459" y="352.3" width="1" height="118.7" fill="url(#sg)" opacity="0.39"/>
<rect x="460" y="339.2" width="1" height="131.8" fill="url(#sg)" opacity="0.46"/>
<rect x="461" y="363.6" width="1" height="107.4" fill="url(#sg)" opacity="0.35"/>
<rect x="462" y="369.2" width="1" height="101.8" fill="url(#sg)" opacity="0.30"/>
<rect x="463" y="343.8" width="1" height="127.2" fill="url(#sg)" opacity="0.74"/>
<rect x="464" y="372.5" width="1" height="98.5" fill="url(#sg)" opacity="0.52"/>
<rect x="465" y="391.6" width="1" height="79.4" fill="url(#sg)" opacity="0.20"/>
<rect x="466" y="325.3" width="1" height="145.7" fill="url(#sg)" opacity="0.66"/>
<rect x="467" y="367.4" width="1" height="103.6" fill="url(#sg)" opacity="0.58"/>
<rect x="468" y="331.9" width="1" height="139.1" fill="url(#sg)" opacity="0.63"/>
<rect x="469" y="333.3" width="1" height="137.7" fill="url(#sg)" opacity="0.32"/>
<rect x="470" y="334.4" width="1" height="136.6" fill="url(#sg)" opacity="0.47"/>
<rect x="471" y="331.0" width="1" height="140.0" fill="url(#sg)" opacity="0.70"/>
<rect x="472" y="327.8" width="1" height="143.2" fill="url(#sg)" opacity="0.53"/>
<rect x="473" y="385.6" width="1" height="85.4" fill="url(#sg)" opacity="0.44"/>
<rect x="474" y="346.4" width="1" height="124.6" fill="url(#sg)" opacity="0.24"/>
<rect x="475" y="390.4" width="1" height="80.6" fill="url(#sg)" opacity="0.44"/>
<rect x="476" y="373.9" width="1" height="97.1" fill="url(#sg)" opacity="0.51"/>
<rect x="477" y="360.8" width="1" height="110.2" fill="url(#sg)" opacity="0.24"/>
<rect x="478" y="369.7" width="1" height="101.3" fill="url(#sg)" opacity="0.56"/>
<rect x="479" y="345.3" width="1" height="125.7" fill="url(#sg)" opacity="0.28"/>
<rect x="480" y="338.2" width="1" height="132.8" fill="url(#sg)" opacity="0.46"/>
<rect x="481" y="383.0" width="1" height="88.0" fill="url(#sg)" opacity="0.24"/>
<rect x="482" y="381.1" width="1" height="89.9" fill="url(#sg)" opacity="0.19"/>
<rect x="483" y="345.5" width="1" height="125.5" fill="url(#sg)" opacity="0.14"/>
<rect x="484" y="361.7" width="1" height="109.3" fill="url(#sg)" opacity="0.11"/>
<rect x="485" y="367.6" width="1" height="103.4" fill="url(#sg)" opacity="0.27"/>
<rect x="486" y="381.7" width="1" height="89.3" fill="url(#sg)" opacity="0.67"/>
<rect x="487" y="392.7" width="1" height="78.3" fill="url(#sg)" opacity="0.20"/>
<rect x="488" y="331.6" width="1" height="139.4" fill="url(#sg)" opacity="0.49"/>
<rect x="489" y="380.6" width="1" height="90.4" fill="url(#sg)" opacity="0.63"/>
<rect x="490" y="347.6" width="1" height="123.4" fill="url(#sg)" opacity="0.25"/>
<rect x="491" y="365.4" width="1" height="105.6" fill="url(#sg)" opacity="0.30"/>
<rect x="492" y="331.7" width="1" height="139.3" fill="url(#sg)" opacity="0.36"/>
<rect x="493" y="378.1" width="1" height="92.9" fill="url(#sg)" opacity="0.58"/>
<rect x="494" y="358.1" width="1" height="112.9" fill="url(#sg)" opacity="0.40"/>
<rect x="495" y="374.1" width="1" height="96.9" fill="url(#sg)" opacity="0.47"/>
<rect x="496" y="325.0" width="1" height="146.0" fill="url(#sg)" opacity="0.56"/>
<rect x="497" y="385.3" width="1" height="85.7" fill="url(#sg)" opacity="0.42"/>
<rect x="498" y="323.4" width="1" height="147.6" fill="url(#sg)" opacity="0.40"/>
<rect x="499" y="366.2" width="1" height="104.8" fill="url(#sg)" opacity="0.41"/>
<rect x="500" y="328.2" width="1" height="142.8" fill="url(#sg)" opacity="0.40"/>
<rect x="501" y="345.8" width="1" height="125.2" fill="url(#sg)" opacity="0.28"/>
<rect x="502" y="329.2" width="1" height="141.8" fill="url(#sg)" opacity="0.40"/>
<rect x="503" y="329.6" width="1" height="141.4" fill="url(#sg)" opacity="0.34"/>
<rect x="504" y="351.7" width="1" height="119.3" fill="url(#sg)" opacity="0.36"/>
<rect x="505" y="343.4" width="1" height="127.6" fill="url(#sg)" opacity="0.23"/>
<rect x="506" y="364.5" width="1" height="106.5" fill="url(#sg)" opacity="0.70"/>
<rect x="507" y="325.2" width="1" height="145.8" fill="url(#sg)" opacity="0.46"/>
<rect x="508" y="364.5" width="1" height="106.5" fill="url(#sg)" opacity="0.56"/>
<rect x="509" y="332.3" width="1" height="138.7" fill="url(#sg)" opacity="0.58"/>
<rect x="510" y="324.7" width="1" height="146.3" fill="url(#sg)" opacity="0.22"/>
<rect x="511" y="345.7" width="1" height="125.3" fill="url(#sg)" opacity="0.40"/>
<rect x="512" y="344.6" width="1" height="126.4" fill="url(#sg)" opacity="0.32"/>
<rect x="513" y="344.5" width="1" height="126.5" fill="url(#sg)" opacity="0.39"/>
<rect x="514" y="410.8" width="1" height="60.2" fill="url(#sg)" opacity="0.14"/>
<rect x="515" y="413.3" width="1" height="57.7" fill="url(#sg)" opacity="0.22"/>
<rect x="516" y="399.5" width="1" height="71.5" fill="url(#sg)" opacity="0.13"/>
<rect x="517" y="371.7" width="1" height="99.3" fill="url(#sg)" opacity="0.42"/>
<rect x="518" y="349.1" width="1" height="121.9" fill="url(#sg)" opacity="0.62"/>
<rect x="519" y="378.7" width="1" height="92.3" fill="url(#sg)" opacity="0.41"/>
<rect x="520" y="319.0" width="1" height="152.0" fill="url(#sg)" opacity="0.49"/>
<rect x="521" y="342.5" width="1" height="128.5" fill="url(#sg)" opacity="0.54"/>
<rect x="522" y="342.7" width="1" height="128.3" fill="url(#sg)" opacity="0.26"/>
<rect x="523" y="320.4" width="1" height="150.6" fill="url(#sg)" opacity="0.56"/>
<rect x="524" y="361.2" width="1" height="109.8" fill="url(#sg)" opacity="0.59"/>
<rect x="525" y="339.2" width="1" height="131.8" fill="url(#sg)" opacity="0.28"/>
<rect x="526" y="382.9" width="1" height="88.1" fill="url(#sg)" opacity="0.23"/>
<rect x="527" y="405.0" width="1" height="66.0" fill="url(#sg)" opacity="0.28"/>
<rect x="528" y="382.8" width="1" height="88.2" fill="url(#sg)" opacity="0.20"/>
<rect x="529" y="371.4" width="1" height="99.6" fill="url(#sg)" opacity="0.19"/>
<rect x="530" y="397.2" width="1" height="73.8" fill="url(#sg)" opacity="0.35"/>
<rect x="531" y="383.4" width="1" height="87.6" fill="url(#sg)" opacity="0.31"/>
<rect x="532" y="339.6" width="1" height="131.4" fill="url(#sg)" opacity="0.49"/>
<rect x="533" y="375.1" width="1" height="95.9" fill="url(#sg)" opacity="0.26"/>
<rect x="534" y="323.5" width="1" height="147.5" fill="url(#sg)" opacity="0.37"/>
<rect x="535" y="347.8" width="1" height="123.2" fill="url(#sg)" opacity="0.51"/>
<rect x="536" y="325.3" width="1" height="145.7" fill="url(#sg)" opacity="0.47"/>
<rect x="537" y="341.5" width="1" height="129.5" fill="url(#sg)" opacity="0.68"/>
<rect x="538" y="340.9" width="1" height="130.1" fill="url(#sg)" opacity="0.23"/>
<rect x="539" y="397.7" width="1" height="73.3" fill="url(#sg)" opacity="0.18"/>
<rect x="540" y="390.8" width="1" height="80.2" fill="url(#sg)" opacity="0.20"/>
<rect x="541" y="376.0" width="1" height="95.0" fill="url(#sg)" opacity="0.25"/>
<rect x="542" y="400.2" width="1" height="70.8" fill="url(#sg)" opacity="0.42"/>
<rect x="543" y="344.3" width="1" height="126.7" fill="url(#sg)" opacity="0.49"/>
<rect x="544" y="326.9" width="1" height="144.1" fill="url(#sg)" opacity="0.63"/>
<rect x="545" y="335.6" width="1" height="135.4" fill="url(#sg)" opacity="0.25"/>
<rect x="546" y="321.1" width="1" height="149.9" fill="url(#sg)" opacity="0.57"/>
<rect x="547" y="318.0" width="1" height="153.0" fill="url(#sg)" opacity="0.63"/>
<rect x="548" y="343.9" width="1" height="127.1" fill="url(#sg)" opacity="0.23"/>
<rect x="549" y="367.8" width="1" height="103.2" fill="url(#sg)" opacity="0.55"/>
<rect x="550" y="356.5" width="1" height="114.5" fill="url(#sg)" opacity="0.24"/>
<rect x="551" y="378.1" width="1" height="92.9" fill="url(#sg)" opacity="0.33"/>
<rect x="552" y="351.7" width="1" height="119.3" fill="url(#sg)" opacity="0.26"/>
</g>
<rect x="455" y="282" width="1" height="150" fill="#0c1a1c" opacity="0.5"/>
<linearGradient id="bg2" x1="0" y1="0" x2="0" y2="1"><stop offset="0" stop-color="#2a9848" stop-opacity="0"/><stop offset="1" stop-color="#40a840" stop-opacity="0.45"/></linearGradient>
<rect x="358" y="452" width="33" height="16" fill="url(#bg2)" />
<rect x="392" y="452" width="60" height="16" fill="url(#bg2)" />
<rect x="456" y="452" width="26" height="16" fill="url(#bg2)" />
<rect x="484" y="452" width="29" height="16" fill="url(#bg2)" />
<rect x="515" y="452" width="10" height="16" fill="url(#bg2)" />
<rect x="528" y="452" width="10" height="16" fill="url(#bg2)" />
<rect x="540" y="452" width="10" height="16" fill="url(#bg2)" />
<rect x="362" y="468" width="29" height="3" fill="#d09a2a" opacity="0.8"/>
<rect x="395" y="468" width="25.5" height="3" fill="#d09a2a" opacity="0.8"/>
<rect x="428" y="468" width="24.5" height="3" fill="#d09a2a" opacity="0.8"/>
<rect x="457" y="468" width="24.5" height="3" fill="#d09a2a" opacity="0.8"/>
<rect x="485" y="468" width="28" height="3" fill="#d09a2a" opacity="0.8"/>
<rect x="516" y="468" width="11" height="3" fill="#d09a2a" opacity="0.8"/>
<rect x="529" y="468" width="11.5" height="3" fill="#d09a2a" opacity="0.8"/>
<rect x="542" y="468" width="7" height="3" fill="#d09a2a" opacity="0.8"/>
<filter id="glow" x="-0.1" y="-0.3" width="1.2" height="1.6">
<feMorphology in="SourceAlpha" operator="dilate" radius="3 2.6" result="d"/>
<feTurbulence type="turbulence" baseFrequency="0.6" numOctaves="1" seed="9" result="tn"/>
<feDisplacementMap in="d" in2="tn" scale="3.5" xChannelSelector="R" yChannelSelector="G" result="dd"/>
<feFlood flood-color="#2e9a2c"/>
<feComposite in2="dd" operator="in"/>
</filter>
<g filter="url(#glow)"><path d="M368 438.4H379.3C384.5 438.4 386.9 441.5 386.9 446.5C386.9 451.5 384.5 454.6 379.3 454.6H368C362.8 454.6 360.4 451.5 360.4 446.5C360.4 441.5 362.8 438.4 368 438.4ZM373.9 443C376.6 443 378.2 444.8 378.2 447.35C378.2 449.9 376.6 451.7 373.9 451.7C371.2 451.7 369.6 449.9 369.6 447.35C369.6 444.8 371.2 443 373.9 443ZM391.5 438.4H400.7V446.3H412.2V454.6H391.5ZM425 438.4H434.1L444.5 454.6H435.5L434 451.5H424.8L423.3 454.6H414.5ZM429.4 444L427 448.5H431.8ZM426 438.2L431.5 432.3H436.5L430.5 438.2Z" fill="#000" fill-rule="nonzero"/></g>
<path d="M429.5 434V428C430 425 433 423.5 436 423.5C440 423.5 441 426 441 429V434Z" fill="#2e9a2c" opacity="0.85"/>
<rect x="352.3" y="442" width="8" height="11" fill="#2a9a2a" opacity="0.5"/>
<rect x="445" y="444" width="6.4" height="9" fill="#2a9a2a" opacity="0.5"/>
<path d="M368 438.4H379.3C384.5 438.4 386.9 441.5 386.9 446.5C386.9 451.5 384.5 454.6 379.3 454.6H368C362.8 454.6 360.4 451.5 360.4 446.5C360.4 441.5 362.8 438.4 368 438.4ZM373.9 443C376.6 443 378.2 444.8 378.2 447.35C378.2 449.9 376.6 451.7 373.9 451.7C371.2 451.7 369.6 449.9 369.6 447.35C369.6 444.8 371.2 443 373.9 443ZM391.5 438.4H400.7V446.3H412.2V454.6H391.5ZM425 438.4H434.1L444.5 454.6H435.5L434 451.5H424.8L423.3 454.6H414.5ZM429.4 444L427 448.5H431.8Z" fill="#d9b31f" stroke="none" stroke-width="1" fill-rule="evenodd"/>
<path d="M426 438.2L431.5 432.3H436.5L430.5 438.2Z" fill="#d9b31f" stroke="none" stroke-width="1" />
<defs>
<linearGradient id="twv" x1="0" y1="0" x2="0" y2="1"><stop offset="0" stop-color="#222"/><stop offset="0.2" stop-color="#9a9a9a"/><stop offset="0.5" stop-color="#d8d8d8"/><stop offset="0.8" stop-color="#9a9a9a"/><stop offset="1" stop-color="#222"/></linearGradient>
<linearGradient id="twh" x1="0" y1="0" x2="1" y2="0"><stop offset="0" stop-color="#111" stop-opacity="0.9"/><stop offset="0.15" stop-color="#333" stop-opacity="0.3"/><stop offset="0.5" stop-color="#fff" stop-opacity="0"/><stop offset="0.85" stop-color="#333" stop-opacity="0.3"/><stop offset="1" stop-color="#111" stop-opacity="0.9"/></linearGradient>
</defs>
<rect x="628" y="396" width="10" height="61" fill="#a8a8a8" />
<rect x="640" y="396" width="10" height="61" rx="2" fill="#5a5a5a"/>
<rect x="642" y="395.5827422813943" width="6" height="1.4554074824745125" fill="#f4f4f4" />
<rect x="642" y="397.5915601208842" width="6" height="2.3293280416060362" fill="#f4f4f4" />
<rect x="642" y="401.90186080788266" width="6" height="3.0955543486249124" fill="#f4f4f4" />
<rect x="642" y="408.1644494150744" width="6" height="3.6920113050597796" fill="#f4f4f4" />
<rect x="642" y="415.8719682585532" width="6" height="4.070377515566392" fill="#f4f4f4" />
<rect x="642" y="424.4" width="6" height="4.2" fill="#f4f4f4" />
<rect x="642" y="433.0576542258804" width="6" height="4.070377515566392" fill="#f4f4f4" />
<rect x="642" y="441.1435392798658" width="6" height="3.692011305059781" fill="#f4f4f4" />
<rect x="642" y="448.00258484349246" width="6" height="3.095554348624913" fill="#f4f4f4" />
<rect x="642" y="453.0791118375098" width="6" height="2.3293280416060376" fill="#f4f4f4" />
<rect x="642" y="455.9618502361312" width="6" height="1.4554074824745125" fill="#f4f4f4" />
<rect x="640" y="396" width="10" height="61" rx="2" fill="url(#twh)" opacity="0.8"/>
<rect x="577.5" y="459" width="60.5" height="9.5" rx="2.5" fill="#505050"/>
<rect x="579" y="460.3" width="57.5" height="7" fill="#9a9a9a" />
<rect x="580.0" y="460.8" width="5" height="2.3" fill="#f4f4f4" />
<rect x="580.0" y="463.1" width="5" height="4" fill="#2f80d0" />
<rect x="586.35" y="460.8" width="5" height="2.3" fill="#f4f4f4" />
<rect x="586.35" y="463.1" width="5" height="4" fill="#2f80d0" />
<rect x="592.7" y="460.8" width="5" height="2.3" fill="#f4f4f4" />
<rect x="592.7" y="463.1" width="5" height="4" fill="#2f80d0" />
<rect x="599.05" y="460.8" width="5" height="2.3" fill="#f4f4f4" />
<rect x="599.05" y="463.1" width="5" height="4" fill="#2f80d0" />
<rect x="605.4" y="460.8" width="5" height="2.3" fill="#f4f4f4" />
<rect x="605.4" y="463.1" width="5" height="4" fill="#2f80d0" />
<rect x="611.75" y="460.8" width="5" height="2.3" fill="#f4f4f4" />
<rect x="611.75" y="463.1" width="5" height="4" fill="#2f80d0" />
<rect x="618.1" y="460.8" width="5" height="2.3" fill="#f4f4f4" />
<rect x="618.1" y="463.1" width="5" height="4" fill="#2f80d0" />
<rect x="624.45" y="460.8" width="5" height="6.3" fill="#f4f4f4" />
<rect x="630.8" y="460.8" width="5" height="6.3" fill="#f4f4f4" />
<rect x="577.5" y="459" width="60.5" height="9.5" rx="2.5" fill="url(#twh)"/>
<rect x="340" y="282" width="1" height="189" fill="#ffffff" />
<path d="M337.5 282H343.5L340.5 286Z" fill="#fff" stroke="none" stroke-width="1" />
<path d="M337.5 471H343.5L340.5 467Z" fill="#fff" stroke="none" stroke-width="1" />
<defs><radialGradient id="ball" cx="0.5" cy="0.5" fx="0.48" fy="0.42" r="0.5">
<stop offset="0" stop-color="#d0f0ff"/><stop offset="0.4" stop-color="#58b4f2"/><stop offset="0.7" stop-color="#2a80c8"/><stop offset="0.88" stop-color="#48525a"/><stop offset="1" stop-color="#9aa0a4"/>
</radialGradient></defs>
<rect x="655.5" y="98.5" width="47" height="20" fill="#f0f0f0" stroke="#d9d9d9" stroke-width="1"/>
<rect x="755.5" y="98.5" width="46" height="20" fill="#f0f0f0" stroke="#d9d9d9" stroke-width="1"/>
<rect x="702.5" y="95.5" width="53" height="24" fill="#ffffff" stroke="#d9d9d9" stroke-width="1"/>
<rect x="654.5" y="118.5" width="245" height="157" fill="#ffffff" stroke="#d9d9d9" stroke-width="1"/>
<rect x="703" y="96" width="52" height="24" fill="#ffffff"/>
<rect x="668.5" y="101.5" width="12" height="9" fill="#f8f8f8" stroke="#777" stroke-width="1"/>
<path d="M674.5 101.5V110.5" fill="none" stroke="#777" stroke-width="1" />
<text x="686" y="112" font-size="11.5" fill="#000" >1</text>
<path d="M717.5 111.5V109.5M719.3 111.5V108.5M721.1 111.5V105.5M722.9 111.5V108.5M724.7 111.5V109.5M726.5 111.5V107.5M728.3 111.5V109.5M717 111.5H730" fill="none" stroke="#888" stroke-width="0.9" />
<text x="735" y="112" font-size="11.5" fill="#000" >2</text>
<path d="M768 106H770L771 103L772 109L773 101L774 111L775 102L776 110L777 104L778 108L779 106H782" fill="none" stroke="#555" stroke-width="1.1" />
<text x="786" y="112" font-size="11.5" fill="#000" >3</text>
<text x="665" y="146" font-size="11.6" fill="#000" textLength="29.7" lengthAdjust="spacingAndGlyphs" >Colour</text>
<rect x="708.5" y="131.0" width="179.5" height="20.0" fill="#e1e1e1" stroke="#adadad" stroke-width="1"/>
<text x="731.5" y="146.0" font-size="11.6" fill="#000" textLength="24" lengthAdjust="spacingAndGlyphs" >Black</text>
<path d="M876.2 139.8L880.2 144.10000000000002L884.2 139.8" fill="none" stroke="#333" stroke-width="1.1" />
<rect x="715" y="135" width="12" height="12" fill="#fff" />
<rect x="717" y="137" width="8" height="8" fill="#000" />
<rect x="665.5" y="228.5" width="223" height="35" fill="#fff" stroke="#828282" stroke-width="1"/>
<rect x="672.0" y="234.8" width="22" height="22" fill="#b9b9b9" stroke="#a0a0a0" stroke-width="1"/>
<rect x="673.5" y="236.3" width="19" height="19" fill="#b4b4b4" stroke="#d0d0d0" stroke-width="1"/>
<circle cx="683.0" cy="240.3" r="1.9" fill="#a01010"/>
<circle cx="683.0" cy="243.9" r="1.9" fill="#701010"/>
<circle cx="683.0" cy="247.5" r="1.9" fill="#401010"/>
<circle cx="683.0" cy="251.1" r="1.9" fill="#000"/>
<rect x="703.5" y="234.5" width="23" height="23" fill="#cce4f7" stroke="#005499" stroke-width="1"/>
<ellipse cx="715" cy="246" rx="5" ry="4.5" fill="#e4e4e4" stroke="#8a8a8a" stroke-width="1"/>
<circle cx="715" cy="246" r="2" fill="#d0d0d0" stroke="#777" stroke-width="0.8"/>
<path d="M710 244L708 246L710 248" fill="none" stroke="#999" stroke-width="0.9" />
<text x="834.2" y="250.2" font-size="11.6" fill="#000" textLength="26.4" lengthAdjust="spacingAndGlyphs" >Show</text>
<circle cx="874.5" cy="244.8" r="7" fill="url(#ball)"/>
<rect x="655.5" y="284.5" width="48" height="21" fill="#f0f0f0" stroke="#d9d9d9" stroke-width="1"/>
<rect x="703.5" y="284.5" width="49" height="21" fill="#f0f0f0" stroke="#d9d9d9" stroke-width="1"/>
<rect x="752.5" y="281.5" width="51" height="25" fill="#ffffff" stroke="#d9d9d9" stroke-width="1"/>
<rect x="654.5" y="305.5" width="245" height="164" fill="#ffffff" stroke="#d9d9d9" stroke-width="1"/>
<rect x="753" y="282" width="50" height="25" fill="#ffffff"/>
<rect x="668.5" y="289.5" width="12" height="9" fill="#f8f8f8" stroke="#777" stroke-width="1"/>
<path d="M674.5 289.5V298.5" fill="none" stroke="#777" stroke-width="1" />
<text x="686" y="300" font-size="11.5" fill="#000" >1</text>
<path d="M717.5 299.5V297.5M719.3 299.5V296.5M721.1 299.5V293.5M722.9 299.5V296.5M724.7 299.5V297.5M726.5 299.5V295.5M728.3 299.5V297.5M717 299.5H730" fill="none" stroke="#888" stroke-width="0.9" />
<text x="735.5" y="300" font-size="11.5" fill="#000" >2</text>
<rect x="768" y="287" width="10" height="11" fill="#b0dcea" />
<rect x="769" y="288" width="8" height="9" fill="#222" />
<rect x="770" y="289.5" width="6" height="1.2" fill="#e08a20" />
<rect x="770" y="292.0" width="6" height="1.2" fill="#e08a20" />
<rect x="770" y="294.5" width="6" height="1.2" fill="#e08a20" />
<text x="785.5" y="300" font-size="11.5" fill="#000" >3</text>
<text x="665" y="332.9" font-size="11.6" fill="#000" textLength="29.7" lengthAdjust="spacingAndGlyphs" >Colour</text>
<rect x="715.8" y="319.1" width="112.20000000000005" height="17.599999999999966" fill="#e1e1e1" stroke="#adadad" stroke-width="1"/>
<text x="718.6999999999999" y="332.9" font-size="11.6" fill="#000" textLength="28.5" lengthAdjust="spacingAndGlyphs" >Green</text>
<path d="M816.2 326.7L820.2 331.0L824.2 326.7" fill="none" stroke="#333" stroke-width="1.1" />
<text x="665" y="357.6" font-size="11.6" fill="#000" textLength="24.3" lengthAdjust="spacingAndGlyphs" >Scale</text>
<rect x="715.8" y="344.1" width="67.20000000000005" height="17.899999999999977" fill="#e1e1e1" stroke="#adadad" stroke-width="1"/>
<text x="718.6999999999999" y="358.05" font-size="11.6" fill="#000" textLength="17.1" lengthAdjust="spacingAndGlyphs" >dBV</text>
<path d="M771.2 351.85L775.2 356.15000000000003L779.2 351.85" fill="none" stroke="#333" stroke-width="1.1" />
<rect x="790.9" y="344.1" width="66.89999999999998" height="17.899999999999977" fill="#e1e1e1" stroke="#adadad" stroke-width="1"/>
<text x="793.8" y="358.05" font-size="11.6" fill="#000" textLength="25.2" lengthAdjust="spacingAndGlyphs" >None</text>
<path d="M846.0 351.85L850.0 356.15000000000003L854.0 351.85" fill="none" stroke="#333" stroke-width="1.1" />
<text x="665" y="382.8" font-size="11.6" fill="#000" textLength="36.7" lengthAdjust="spacingAndGlyphs" >Window</text>
<rect x="715.8" y="368.7" width="54.0" height="18.19999999999999" fill="#e1e1e1" stroke="#adadad" stroke-width="1"/>
<text x="718.6999999999999" y="382.79999999999995" font-size="11.6" fill="#000" textLength="22.7" lengthAdjust="spacingAndGlyphs" >1024</text>
<path d="M758.0 376.59999999999997L762.0 380.9L766.0 376.59999999999997" fill="none" stroke="#333" stroke-width="1.1" />
<rect x="777.5" y="368.7" width="66.79999999999995" height="18.19999999999999" fill="#e1e1e1" stroke="#adadad" stroke-width="1"/>
<text x="780.4" y="382.79999999999995" font-size="11.6" fill="#000" textLength="25.3" lengthAdjust="spacingAndGlyphs" >50 %</text>
<path d="M832.5 376.59999999999997L836.5 380.9L840.5 376.59999999999997" fill="none" stroke="#333" stroke-width="1.1" />
<rect x="851.9" y="368.7" width="36.0" height="18.19999999999999" fill="#e1e1e1" stroke="#adadad" stroke-width="1"/>
<text x="854.8" y="382.79999999999995" font-size="11.6" fill="#000" textLength="11.6" lengthAdjust="spacingAndGlyphs" >1x</text>
<path d="M876.1 376.59999999999997L880.1 380.9L884.1 376.59999999999997" fill="none" stroke="#333" stroke-width="1.1" />
<text x="665" y="408.2" font-size="11.6" fill="#000" textLength="18.2" lengthAdjust="spacingAndGlyphs" >Bins</text>
<rect x="715.8" y="394.1" width="82.10000000000002" height="18.19999999999999" fill="#e1e1e1" stroke="#adadad" stroke-width="1"/>
<text x="718.6999999999999" y="408.20000000000005" font-size="11.6" fill="#000" textLength="32.6" lengthAdjust="spacingAndGlyphs" >All Bins</text>
<path d="M786.1 402.00000000000006L790.1 406.30000000000007L794.1 402.00000000000006" fill="none" stroke="#333" stroke-width="1.1" />
<rect x="805.8" y="394.1" width="82.10000000000002" height="18.19999999999999" fill="#e1e1e1" stroke="#adadad" stroke-width="1"/>
<text x="808.6999999999999" y="408.20000000000005" font-size="11.6" fill="#000" textLength="28.3" lengthAdjust="spacingAndGlyphs" >Linear</text>
<path d="M876.1 402.00000000000006L880.1 406.30000000000007L884.1 402.00000000000006" fill="none" stroke="#333" stroke-width="1.1" />
<rect x="665.5" y="422.5" width="223" height="35" fill="#fff" stroke="#828282" stroke-width="1"/>
<rect x="672.0" y="428.5" width="22" height="22" fill="#b9b9b9" stroke="#a0a0a0" stroke-width="1"/>
<rect x="673.5" y="430" width="19" height="19" fill="#b4b4b4" stroke="#d0d0d0" stroke-width="1"/>
<circle cx="683.0" cy="434.0" r="1.9" fill="#a01010"/>
<circle cx="683.0" cy="437.6" r="1.9" fill="#701010"/>
<circle cx="683.0" cy="441.2" r="1.9" fill="#401010"/>
<circle cx="683.0" cy="444.8" r="1.9" fill="#000"/>
<rect x="703.5" y="428.3" width="23" height="23" fill="#cce4f7" stroke="#005499" stroke-width="1"/>
<ellipse cx="715" cy="439.8" rx="5" ry="4.5" fill="#e4e4e4" stroke="#8a8a8a" stroke-width="1"/>
<circle cx="715" cy="439.8" r="2" fill="#d0d0d0" stroke="#777" stroke-width="0.8"/>
<path d="M710 437.8L708 439.8L710 441.8" fill="none" stroke="#999" stroke-width="0.9" />
<text x="834.2" y="443.8" font-size="11.6" fill="#000" textLength="26.4" lengthAdjust="spacingAndGlyphs" >Show</text>
<circle cx="874.5" cy="438.6" r="7" fill="url(#ball)"/>
<circle cx="846" cy="326.5" r="9.6" fill="none" stroke="#a8a8a8" stroke-width="0.9"/>
<path d="M842 331.5L846.8 328.5" fill="none" stroke="#707070" stroke-width="1.7" />
<path d="M842 331.5L838 335.5" fill="none" stroke="#8ab8e0" stroke-width="0.7" />
<path d="M838 335.5L837 336.5M854 335.5L855 336.5" fill="none" stroke="#333" stroke-width="0.9" />
<circle cx="876" cy="326.5" r="9.6" fill="none" stroke="#a8a8a8" stroke-width="0.9"/>
<path d="M872 331.5L876.8 328.5" fill="none" stroke="#707070" stroke-width="1.7" />
<path d="M872 331.5L868 335.5" fill="none" stroke="#8ab8e0" stroke-width="0.7" />
<path d="M868 335.5L867 336.5M884 335.5L885 336.5" fill="none" stroke="#333" stroke-width="0.9" />
<circle cx="876.5" cy="352.2" r="9.6" fill="#fff" stroke="#cfcfcf" stroke-width="0.9"/>
<path d="M871.15 358.15A8.0 8.0 0 0 1 877.06 344.22" fill="none" stroke="#1f78d0" stroke-width="3.8" />
<path d="M876.5 351.7V347.09999999999997" fill="none" stroke="#555" stroke-width="1.4" />
<path d="M869.0 360.7L868.0 361.7M884.0 360.7L885.0 361.7" fill="none" stroke="#333" stroke-width="0.9" />
<rect x="10" y="474" width="645" height="39.5" fill="#f7f7f7" />
<rect x="10" y="484" width="645" height="1" fill="#efefef" />
<rect x="10" y="489" width="645" height="1" fill="#efefef" />
<rect x="10" y="499" width="645" height="1" fill="#efefef" />
<rect x="10" y="504" width="645" height="1" fill="#efefef" />
<rect x="10" y="494" width="645" height="1" fill="#3aa03a" />
<path d="M48.5 491.5V497.5M49.5 490.1V498.9M50.5 489.4V500.1M51.5 488.1V500.5M52.5 480.8V502.2M53.5 487.1V506.6M54.5 487.6V502.4M55.5 481.9V507.8M56.5 484.0V501.1M57.5 487.9V501.1M58.5 487.7V501.2M59.5 487.5V501.3M60.5 488.1V501.4M61.5 483.3V507.5M62.5 487.0V501.7M63.5 488.2V500.8M64.5 487.7V501.4M65.5 487.7V500.7M66.5 488.2V500.9M67.5 483.7V501.7M68.5 487.3V501.9M69.5 487.6V501.9M70.5 488.1V501.1M71.5 484.1V502.2M72.5 482.1V501.9M73.5 482.3V505.3M74.5 487.6V501.3M75.5 486.5V502.6M76.5 487.7V502.6M77.5 487.2V501.8M78.5 487.6V501.6M79.5 487.5V502.5M80.5 482.6V501.3M81.5 482.6V502.5M82.5 484.6V501.6M83.5 487.6V502.7M84.5 486.6V501.3M85.5 482.3V505.0M86.5 487.5V502.5M87.5 486.8V502.5M88.5 486.6V505.7M89.5 487.0V502.8M90.5 487.6V501.0M91.5 488.2V501.3M92.5 488.4V501.7M93.5 488.4V500.9M94.5 489.6V499.2M95.5 491.0V498.3M97.5 488.5V499.9M98.5 485.7V502.3M99.5 485.3V504.2M100.5 482.6V503.8M101.5 483.9V505.0M102.5 484.6V504.3M103.5 481.8V505.2M104.5 484.4V506.7M105.5 485.1V506.7M106.5 481.1V505.8M107.5 481.2V505.2M108.5 481.2V504.3M109.5 480.6V504.9M110.5 483.5V505.6M111.5 484.0V505.3M112.5 479.5V505.1M113.5 482.6V505.3M114.5 482.6V507.4M115.5 484.2V504.5M116.5 485.6V503.4M117.5 486.8V502.6M118.5 488.2V501.4M119.5 488.3V500.5M120.5 489.0V499.9M121.5 489.5V499.5M122.5 489.1V499.2M123.5 489.3V499.9M124.5 489.7V499.5M125.5 489.2V500.6M126.5 488.5V500.6M127.5 488.6V500.4M128.5 488.6V500.2M129.5 484.7V501.0M130.5 487.2V501.8M131.5 488.2V501.3M132.5 486.6V501.5M133.5 486.6V502.4M134.5 487.5V501.8M135.5 482.3V502.0M136.5 486.2V501.8M137.5 486.3V503.2M138.5 486.1V502.3M139.5 485.8V503.7M140.5 486.0V505.7M141.5 485.2V506.4M142.5 486.0V506.1M143.5 485.5V503.8M144.5 486.5V503.0M145.5 485.5V502.7M146.5 485.0V508.5M147.5 485.5V502.4M148.5 486.4V502.9M149.5 484.9V502.5M150.5 485.5V504.2M151.5 483.7V504.1M152.5 485.4V504.2M153.5 484.8V503.1M154.5 484.2V503.8M155.5 484.7V509.1M156.5 485.7V506.4M157.5 485.0V505.1M158.5 480.8V510.3M159.5 480.8V503.6M160.5 483.5V503.8M161.5 483.5V505.4M162.5 484.6V503.7M163.5 477.6V505.2M164.5 483.7V505.6M165.5 483.7V504.5M166.5 481.5V503.9M167.5 485.0V505.3M168.5 485.2V505.3M169.5 484.0V503.7M170.5 485.7V504.9M171.5 484.5V503.6M172.5 483.7V503.2M173.5 482.2V502.6M174.5 486.0V503.8M175.5 480.7V502.6M176.5 487.3V502.4M177.5 487.1V502.9M178.5 486.8V502.6M179.5 486.7V501.0M180.5 487.4V501.4M181.5 487.6V500.6M182.5 488.0V504.3M183.5 488.5V500.8M184.5 489.3V500.2M185.5 490.0V498.7M186.5 491.2V498.3M187.5 491.6V496.9M188.5 492.7V496.3M195.5 492.8V496.5M196.5 491.8V496.9M197.5 490.9V498.0M198.5 490.8V497.9M199.5 489.1V499.5M200.5 490.9V497.9M201.5 490.6V498.9M202.5 490.9V498.3M203.5 488.2V498.4M204.5 490.2V499.0M205.5 486.6V499.1M206.5 489.7V503.1M207.5 489.8V503.1M208.5 490.0V500.6M209.5 489.8V499.4M210.5 490.0V499.6M211.5 489.7V499.5M212.5 490.1V499.0M213.5 487.8V499.2M214.5 487.1V498.8M215.5 489.6V499.2M216.5 490.2V499.0M217.5 487.8V499.2M218.5 489.7V499.2M219.5 490.2V498.9M220.5 490.6V498.9M221.5 490.0V498.7M222.5 490.4V498.5M223.5 483.7V506.0M224.5 490.4V498.6M225.5 490.0V498.8M226.5 490.2V498.2M227.5 490.9V498.1M228.5 491.3V498.1M229.5 491.5V497.6M230.5 491.4V497.2M231.5 492.4V496.9M232.5 492.8V496.2M233.5 493.2V495.8M236.5 492.1V497.3M237.5 491.5V498.0M238.5 490.5V498.7M239.5 489.8V499.2M240.5 490.4V498.8M241.5 490.1V499.5M242.5 488.6V499.5M243.5 490.2V501.9M244.5 487.3V501.0M245.5 487.8V499.7M246.5 489.5V499.8M247.5 489.0V501.6M248.5 489.3V499.5M249.5 489.8V502.2M250.5 486.2V498.9M251.5 489.4V498.9M252.5 490.2V498.9M253.5 489.7V499.4M254.5 486.6V498.9M255.5 486.6V499.5M256.5 490.1V499.0M257.5 489.8V499.7M258.5 489.6V499.6M259.5 489.3V501.7M260.5 489.0V500.0M261.5 488.8V499.9M262.5 488.5V499.6M263.5 488.3V500.0M264.5 488.4V500.2M265.5 488.9V500.6M266.5 485.9V500.4M267.5 485.9V500.8M268.5 488.4V500.2M269.5 488.1V500.0M270.5 488.7V500.9M271.5 488.5V500.0M272.5 488.6V500.0M273.5 489.3V499.9M274.5 486.6V500.0M275.5 489.4V499.5M276.5 489.9V501.4M277.5 488.8V498.3M278.5 491.8V497.0M284.5 490.8V497.8M285.5 489.7V500.1M286.5 488.3V500.4M287.5 485.9V501.3M288.5 485.9V500.8M289.5 487.8V502.1M290.5 488.1V501.4M291.5 487.4V502.8M292.5 487.8V500.6M293.5 488.6V500.1M294.5 490.2V499.6M295.5 491.0V497.9M296.5 492.1V497.7M303.5 491.7V497.2M304.5 490.4V498.8M305.5 489.3V500.0M306.5 488.4V500.0M307.5 487.3V500.6M308.5 488.3V500.4M309.5 488.6V500.3M310.5 488.2V502.0M311.5 489.0V500.5M312.5 489.3V499.6M313.5 490.1V499.5M314.5 490.6V498.9M315.5 491.5V497.3M316.5 492.7V496.3M321.5 491.8V497.4M322.5 490.6V498.9M323.5 489.3V499.5M324.5 488.9V500.6M325.5 486.9V500.8M326.5 488.2V500.7M327.5 488.1V500.5M328.5 488.8V501.2M329.5 488.8V500.3M330.5 489.0V500.9M331.5 488.3V499.6M332.5 490.4V498.5M333.5 491.1V498.0M334.5 492.0V497.0M335.5 492.8V496.3" stroke="#008000" stroke-width="1" fill="none"/>
<path d="M48.5 492.9V496.1M49.5 492.3V496.7M50.5 491.5V497.5M51.5 491.5V497.5M52.5 490.2V498.8M53.5 490.7V498.3M54.5 490.7V498.3M55.5 490.7V498.3M56.5 490.6V498.4M57.5 491.0V498.0M58.5 490.7V498.3M59.5 490.9V498.1M60.5 491.1V497.9M61.5 490.9V498.1M62.5 490.7V498.3M63.5 490.8V498.2M64.5 490.5V498.5M65.5 491.0V498.0M66.5 491.0V498.0M67.5 490.9V498.1M68.5 490.8V498.2M69.5 491.0V498.0M70.5 491.0V498.0M71.5 490.7V498.3M72.5 490.3V498.7M73.5 490.4V498.6M74.5 490.4V498.6M75.5 490.9V498.1M76.5 490.8V498.2M77.5 490.7V498.3M78.5 490.5V498.5M79.5 490.3V498.7M80.5 490.7V498.3M81.5 490.6V498.4M82.5 490.6V498.4M83.5 490.6V498.4M84.5 490.5V498.5M85.5 490.8V498.2M86.5 490.7V498.3M87.5 490.4V498.6M88.5 490.9V498.1M89.5 490.8V498.2M90.5 491.1V497.9M91.5 490.8V498.2M92.5 490.9V498.1M93.5 491.1V497.9M94.5 492.0V497.0M95.5 492.7V496.3M97.5 491.3V497.7M98.5 490.3V498.7M99.5 490.0V499.0M100.5 489.0V500.0M101.5 488.8V500.2M102.5 488.6V500.4M103.5 488.6V500.4M104.5 489.3V499.7M105.5 488.8V500.2M106.5 489.4V499.6M107.5 488.7V500.3M108.5 488.9V500.1M109.5 489.2V499.8M110.5 489.4V499.6M111.5 489.3V499.7M112.5 489.3V499.7M113.5 489.4V499.6M114.5 489.1V499.9M115.5 489.3V499.7M116.5 489.4V499.6M117.5 490.2V498.8M118.5 490.7V498.3M119.5 491.1V497.9M120.5 491.6V497.4M121.5 491.7V497.3M122.5 491.6V497.4M123.5 491.7V497.3M124.5 491.8V497.2M125.5 491.3V497.7M126.5 491.6V497.4M127.5 491.0V498.0M128.5 491.5V497.5M129.5 491.1V497.9M130.5 490.9V498.1M131.5 490.6V498.4M132.5 490.3V498.7M133.5 490.4V498.6M134.5 490.7V498.3M135.5 490.6V498.4M136.5 490.1V498.9M137.5 489.8V499.2M138.5 489.8V499.2M139.5 490.2V498.8M140.5 489.9V499.1M141.5 489.6V499.4M142.5 489.5V499.5M143.5 489.4V499.6M144.5 489.6V499.4M145.5 490.2V498.8M146.5 489.8V499.2M147.5 489.7V499.3M148.5 489.4V499.6M149.5 489.4V499.6M150.5 490.0V499.0M151.5 489.7V499.3M152.5 489.6V499.4M153.5 489.3V499.7M154.5 489.5V499.5M155.5 489.5V499.5M156.5 488.9V500.1M157.5 488.8V500.2M158.5 489.4V499.6M159.5 489.0V500.0M160.5 488.7V500.3M161.5 488.8V500.2M162.5 488.8V500.2M163.5 489.2V499.8M164.5 488.9V500.1M165.5 489.2V499.8M166.5 489.2V499.8M167.5 489.3V499.7M168.5 489.3V499.7M169.5 489.2V499.8M170.5 489.6V499.4M171.5 489.3V499.7M172.5 489.4V499.6M173.5 489.5V499.5M174.5 490.3V498.7M175.5 489.9V499.1M176.5 489.9V499.1M177.5 490.5V498.5M178.5 490.8V498.2M179.5 490.5V498.5M180.5 490.6V498.4M181.5 491.3V497.7M182.5 490.9V498.1M183.5 491.3V497.7M184.5 491.7V497.3M185.5 492.2V496.8M186.5 492.5V496.5M187.5 493.2V495.8M188.5 493.5V495.5M195.5 493.5V495.5M196.5 493.0V496.0M197.5 492.7V496.3M198.5 492.7V496.3M199.5 492.8V496.2M200.5 492.7V496.3M201.5 492.5V496.5M202.5 492.6V496.4M203.5 492.5V496.5M204.5 492.3V496.7M205.5 492.3V496.7M206.5 492.0V497.0M207.5 491.8V497.2M208.5 492.0V497.0M209.5 491.8V497.2M210.5 491.9V497.1M211.5 491.8V497.2M212.5 492.2V496.8M213.5 492.1V496.9M214.5 492.0V497.0M215.5 492.2V496.8M216.5 492.1V496.9M217.5 492.3V496.7M218.5 492.1V496.9M219.5 492.2V496.8M220.5 492.3V496.7M221.5 492.2V496.8M222.5 492.4V496.6M223.5 492.4V496.6M224.5 492.3V496.7M225.5 492.5V496.5M226.5 492.5V496.5M227.5 492.6V496.4M228.5 492.8V496.2M229.5 492.6V496.4M230.5 493.1V495.9M231.5 493.4V495.6M232.5 493.5V495.5M233.5 493.8V495.2M236.5 493.2V495.8M237.5 492.7V496.3M238.5 492.5V496.5M239.5 492.0V497.0M240.5 491.9V497.1M241.5 491.9V497.1M242.5 491.9V497.1M243.5 492.2V496.8M244.5 492.1V496.9M245.5 491.7V497.3M246.5 491.7V497.3M247.5 491.7V497.3M248.5 491.9V497.1M249.5 492.1V496.9M250.5 492.0V497.0M251.5 491.9V497.1M252.5 491.8V497.2M253.5 491.8V497.2M254.5 491.9V497.1M255.5 492.2V496.8M256.5 491.8V497.2M257.5 491.7V497.3M258.5 491.5V497.5M259.5 491.7V497.3M260.5 491.5V497.5M261.5 491.3V497.7M262.5 491.4V497.6M263.5 491.7V497.3M264.5 491.4V497.6M265.5 491.4V497.6M266.5 491.7V497.3M267.5 491.3V497.7M268.5 491.2V497.8M269.5 491.5V497.5M270.5 491.2V497.8M271.5 491.4V497.6M272.5 491.2V497.8M273.5 491.4V497.6M274.5 491.5V497.5M275.5 491.6V497.4M276.5 491.8V497.2M277.5 492.7V496.3M278.5 493.2V495.8M284.5 492.4V496.6M285.5 491.7V497.3M286.5 491.3V497.7M287.5 491.2V497.8M288.5 491.2V497.8M289.5 491.0V498.0M290.5 491.4V497.6M291.5 490.8V498.2M292.5 491.3V497.7M293.5 491.4V497.6M294.5 492.2V496.8M295.5 492.4V496.6M296.5 493.2V495.8M303.5 492.9V496.1M304.5 492.5V496.5M305.5 491.5V497.5M306.5 491.4V497.6M307.5 491.4V497.6M308.5 491.2V497.8M309.5 491.3V497.7M310.5 491.4V497.6M311.5 491.6V497.4M312.5 491.4V497.6M313.5 491.8V497.2M314.5 492.7V496.3M315.5 493.1V495.9M316.5 493.6V495.4M321.5 492.8V496.2M322.5 492.4V496.6M323.5 492.0V497.0M324.5 491.5V497.5M325.5 491.6V497.4M326.5 491.3V497.7M327.5 491.5V497.5M328.5 490.9V498.1M329.5 491.5V497.5M330.5 491.4V497.6M331.5 491.5V497.5M332.5 492.2V496.8M333.5 492.7V496.3M334.5 493.3V495.7M335.5 493.5V495.5" stroke="#00c000" stroke-width="1" fill="none"/>
<path d="M10 479H483A4.5 4.5 0 0 1 487.5 483.5V504.5A4.5 4.5 0 0 1 483 509H10" fill="none" stroke="#7a7a7a" stroke-width="1.8"/>
<rect x="19.5" y="474.5" width="2" height="38.5" fill="#ffffff" stroke="#303030" stroke-width="1"/>
<path d="M678.31 479.11L678.45 475.11" fill="none" stroke="#9a9a9a" stroke-width="0.9" />
<path d="M680.62 479.38L681.39 475.45" fill="none" stroke="#9a9a9a" stroke-width="0.9" />
<path d="M682.85 480.01L684.25 476.26" fill="none" stroke="#9a9a9a" stroke-width="0.9" />
<path d="M684.96 480.99L686.94 477.51" fill="none" stroke="#9a9a9a" stroke-width="0.9" />
<path d="M686.89 482.30L689.39 479.18" fill="none" stroke="#9a9a9a" stroke-width="0.9" />
<path d="M688.58 483.90L691.55 481.22" fill="none" stroke="#9a9a9a" stroke-width="0.9" />
<path d="M689.99 485.75L693.35 483.58" fill="none" stroke="#9a9a9a" stroke-width="0.9" />
<path d="M691.09 487.79L694.75 486.19" fill="none" stroke="#9a9a9a" stroke-width="0.9" />
<path d="M691.84 489.99L695.72 489.00" fill="none" stroke="#9a9a9a" stroke-width="0.9" />
<path d="M692.24 492.29L696.22 491.92" fill="none" stroke="#9a9a9a" stroke-width="0.9" />
<path d="M692.26 494.61L696.25 494.89" fill="none" stroke="#9a9a9a" stroke-width="0.9" />
<path d="M691.92 496.91L695.81 497.82" fill="none" stroke="#9a9a9a" stroke-width="0.9" />
<path d="M691.21 499.13L694.90 500.65" fill="none" stroke="#9a9a9a" stroke-width="0.9" />
<path d="M690.15 501.20L693.56 503.29" fill="none" stroke="#9a9a9a" stroke-width="0.9" />
<path d="M688.78 503.07L691.80 505.69" fill="none" stroke="#9a9a9a" stroke-width="0.9" />
<path d="M667.95 506.21A16 16 0 0 1 677.80 477.60" fill="none" stroke="#1f78d0" stroke-width="6" />
<circle cx="677.8" cy="493.6" r="13" fill="#ffffff" stroke="#c8c8c8" stroke-width="0.8"/>
<path d="M677.8 493.6V482.1" fill="none" stroke="#555" stroke-width="2" />
<path d="M663.8 507.1L661.0 509.8M688.5999999999999 504.40000000000003L693.8 509.6" fill="none" stroke="#333" stroke-width="1" />
<rect x="864" y="475.5" width="36.5" height="36.5" fill="#e6e6e6" stroke="#a6a6a6" stroke-width="1"/>
<rect x="867" y="479" width="30" height="29.7" fill="#b6b6b6" />
<circle cx="881.5" cy="487.5" r="2.9" fill="#b01010"/>
<circle cx="881.5" cy="493.6" r="2.9" fill="#7a1010"/>
<circle cx="881.5" cy="499.7" r="2.9" fill="#401010"/>
<circle cx="881.5" cy="505.8" r="2.9" fill="#000"/>
<text x="3.3" y="538" font-size="12" fill="#000" textLength="194.7" lengthAdjust="spacingAndGlyphs" >Visible: 0.000 to 3.743 (duration 3.743)</text>
<rect x="881" y="525" width="1" height="18" fill="#d4d4d4" />
<rect x="892" y="525" width="1" height="18" fill="#d4d4d4" />
<rect x="906" y="533" width="2" height="2" fill="#a0a0a0" />
<rect x="906" y="537" width="2" height="2" fill="#a0a0a0" />
<rect x="902" y="537" width="2" height="2" fill="#a0a0a0" />
<rect x="906" y="541" width="2" height="2" fill="#a0a0a0" />
<rect x="902" y="541" width="2" height="2" fill="#a0a0a0" />
<rect x="898" y="541" width="2" height="2" fill="#a0a0a0" />
</svg></body></html>
